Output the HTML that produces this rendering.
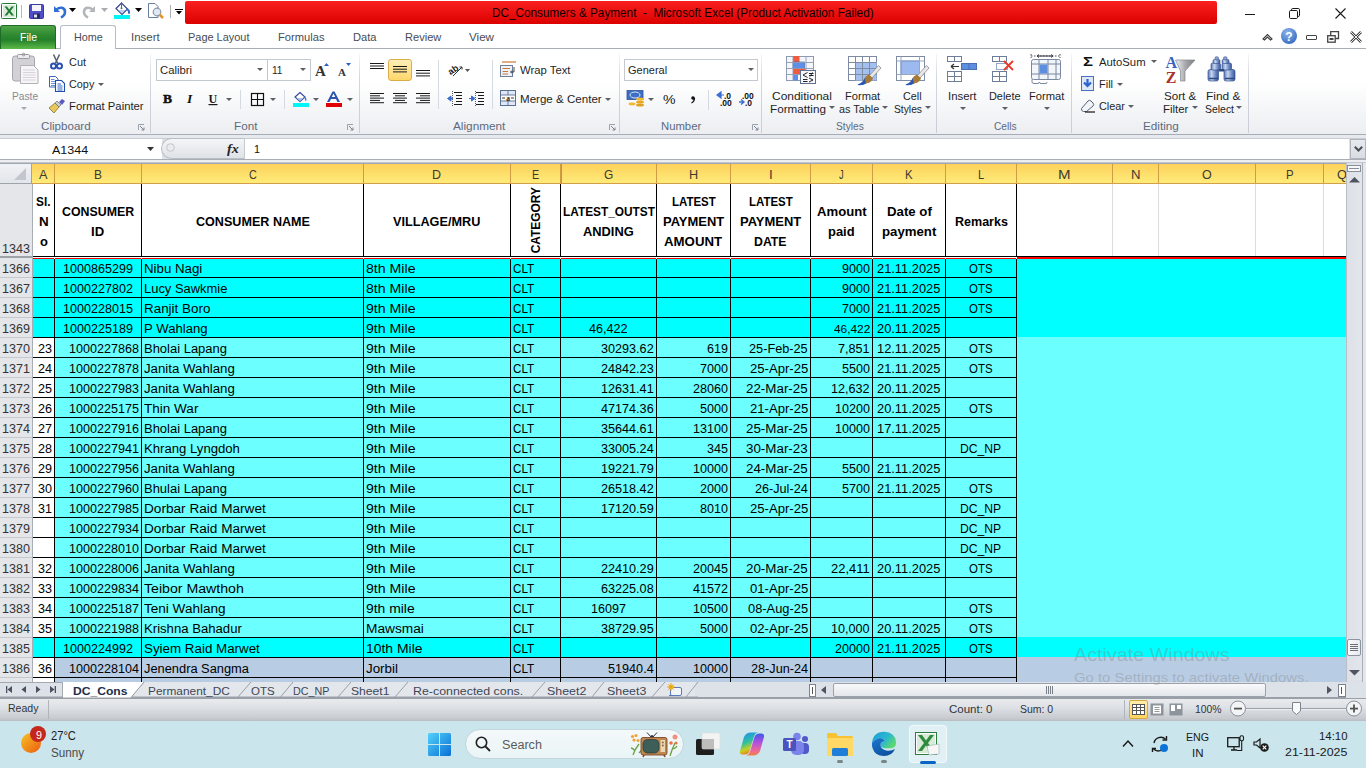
<!DOCTYPE html><html><head><meta charset="utf-8"><style>
*{margin:0;padding:0;box-sizing:border-box}
html,body{width:1366px;height:768px;overflow:hidden;background:#fff;font-family:"Liberation Sans",sans-serif;color:#000}
.a{position:absolute}
.t{white-space:pre;line-height:1;transform-origin:0 0}
svg.a{overflow:visible}
</style></head><body>
<div class="a" style="left:0px;top:0px;width:1366px;height:25px;background:#fff;"></div>
<svg class="a" style="left:1px;top:3px;" width="17" height="17" viewBox="0 0 17 17"><rect x="0.5" y="0.5" width="15" height="15" rx="1" fill="#fff" stroke="#217a3c"/><rect x="2" y="2" width="12" height="12" fill="#d8ecd9"/><path d="M3.5 3.5 L7 8 L3.5 12.5 L6 12.5 L8.2 9.4 L10.4 12.5 L13 12.5 L9.5 8 L13 3.5 L10.5 3.5 L8.2 6.6 L6 3.5 Z" fill="#1f7a36"/></svg>
<div class="a" style="left:21px;top:5px;width:1px;height:13px;background:#b8bcc2;"></div>
<svg class="a" style="left:29px;top:4px;" width="15" height="15" viewBox="0 0 15 15"><rect x="0.5" y="0.5" width="14" height="14" rx="1" fill="#4f4fc8" stroke="#3a3a9a"/><rect x="3" y="1" width="9" height="6" fill="#f4f4fa"/><rect x="4" y="9.5" width="7" height="5" fill="#2a2a60"/><rect x="5" y="10.5" width="3" height="3" fill="#dfe4f0"/></svg>
<svg class="a" style="left:51px;top:3px;" width="16" height="15" viewBox="0 0 16 15"><path d="M3 3 L3 9 L9 9 Z" fill="#2f6fd6"/><path d="M5 7 C8 3.5 14 4 14 9 C14 12 12 13.5 10 14.5" fill="none" stroke="#2f6fd6" stroke-width="2.6"/></svg>
<svg class="a" style="left:69px;top:8px;" width="8" height="5" viewBox="0 0 8 5"><path d="M0 0 H7 L3.5 4 Z" fill="#000"/></svg>
<svg class="a" style="left:82px;top:3px;" width="16" height="15" viewBox="0 0 16 15"><path d="M13 3 L13 9 L7 9 Z" fill="#b4b6ba"/><path d="M11 7 C8 3.5 2 4 2 9 C2 12 4 13.5 6 14.5" fill="none" stroke="#b4b6ba" stroke-width="2.6"/></svg>
<svg class="a" style="left:101px;top:8px;" width="8" height="5" viewBox="0 0 8 5"><path d="M0 0 H7 L3.5 4 Z" fill="#a9acb0"/></svg>
<svg class="a" style="left:114px;top:1px;" width="18" height="19" viewBox="0 0 18 19"><path d="M2 7.5 L7.5 2 L13.5 8 L8 13.5 Z" fill="#fff" stroke="#2d3f8a" stroke-width="1.1"/><path d="M4 9 L11.5 9 L8 12.5 Z" fill="#b9cdec"/><path d="M13 7 Q16.5 8.5 16 12 Q15.5 13.5 14 12.5 Q14.5 10 12.5 8.5 Z" fill="#3a66cc"/><path d="M7.5 1 V7" stroke="#666" stroke-width="1"/><circle cx="7.5" cy="7.3" r="1" fill="#666"/><rect x="0" y="14" width="16" height="4" fill="#00f6f6"/></svg>
<svg class="a" style="left:135px;top:8px;" width="8" height="5" viewBox="0 0 8 5"><path d="M0 0 H7 L3.5 4 Z" fill="#000"/></svg>
<svg class="a" style="left:148px;top:3px;" width="18" height="17" viewBox="0 0 18 17"><path d="M0.5 0.5 H7 L10 3.5 V14.5 H0.5 Z" fill="#fff" stroke="#6a7ea0"/><circle cx="9" cy="9" r="3.8" fill="#dfe9f5" stroke="#8a96a8" stroke-width="1.2"/><path d="M11.5 11.5 L15 15" stroke="#e0952a" stroke-width="2.5"/></svg>
<div class="a" style="left:170px;top:5px;width:1px;height:13px;background:#aeb2b8;"></div>
<div class="a" style="left:175px;top:9px;width:8px;height:1px;background:#000;"></div>
<svg class="a" style="left:176px;top:11px;" width="7" height="4" viewBox="0 0 7 4"><path d="M0 0 H6 L3 3.5 Z" fill="#000"/></svg>
<div class="a" style="left:185px;top:1px;width:1032px;height:23px;background:linear-gradient(#fa2020,#dc0101);border-radius:2px;"></div>
<div class="a t" style="left:491.60px;top:7px;font-size:12px;color:#0d0000;transform:scaleX(0.9798);">DC_Consumers &amp; Payment  -  Microsoft Excel (Product Activation Failed)</div>
<div class="a" style="left:1245px;top:14px;width:10px;height:1px;background:#1a1a1a;"></div>
<svg class="a" style="left:1289px;top:8px;" width="13" height="13" viewBox="0 0 13 13"><rect x="0.5" y="2.5" width="8" height="8" rx="1.2" fill="none" stroke="#1a1a1a"/><path d="M2.5 2.5 V1.8 Q2.5 0.5 3.8 0.5 H9.2 Q10.5 0.5 10.5 1.8 V7.2 Q10.5 8.5 9.2 8.5 H8.5" fill="none" stroke="#1a1a1a"/></svg>
<svg class="a" style="left:1335px;top:8px;" width="12" height="12" viewBox="0 0 12 12"><path d="M0.5 0.5 L10.5 10.5 M10.5 0.5 L0.5 10.5" stroke="#1a1a1a" stroke-width="1.1"/></svg>
<div class="a" style="left:0px;top:25px;width:1366px;height:24px;background:#fff;"></div>
<div class="a" style="left:0px;top:48px;width:1366px;height:1px;background:#a9aeb5;"></div>
<div class="a" style="left:0px;top:25px;width:56px;height:24px;background:linear-gradient(#4fa648 0%,#338c33 35%,#24802a 60%,#5cba48 100%);border-radius:3px 3px 0 0;border:1px solid #1e6b25;border-bottom:none;"></div>
<div class="a t" style="left:19.50px;top:32px;font-size:10.8px;color:#fff;transform:scaleX(0.9769);">File</div>
<div class="a" style="left:60px;top:25px;width:56px;height:24px;background:#fff;border:1px solid #b6bcc5;border-bottom:none;border-radius:3px 3px 0 0;"></div>
<div class="a t" style="left:73.60px;top:32px;font-size:10.8px;color:#474c56;transform:scaleX(0.9997);">Home</div>
<div class="a t" style="left:131.10px;top:32px;font-size:10.8px;color:#474c56;transform:scaleX(1.0625);">Insert</div>
<div class="a t" style="left:188.10px;top:32px;font-size:10.8px;color:#474c56;transform:scaleX(1.0140);">Page Layout</div>
<div class="a t" style="left:278.00px;top:32px;font-size:10.8px;color:#474c56;transform:scaleX(1.0353);">Formulas</div>
<div class="a t" style="left:353.00px;top:32px;font-size:10.8px;color:#474c56;transform:scaleX(1.0301);">Data</div>
<div class="a t" style="left:405.00px;top:32px;font-size:10.8px;color:#474c56;transform:scaleX(1.0251);">Review</div>
<div class="a t" style="left:469.00px;top:32px;font-size:10.8px;color:#474c56;transform:scaleX(1.0769);">View</div>
<svg class="a" style="left:1262px;top:32px;" width="12" height="9" viewBox="0 0 12 9"><path d="M1 7 L5.5 2.5 L10 7 L8.5 8 L5.5 5 L2.5 8 Z" fill="none" stroke="#3a3a3a" stroke-width="1.1"/></svg>
<svg class="a" style="left:1281px;top:28px;" width="17" height="17" viewBox="0 0 17 17"><defs><radialGradient id="hg" cx="0.4" cy="0.3" r="0.8"><stop offset="0" stop-color="#8fb6ec"/><stop offset="1" stop-color="#2f64c0"/></radialGradient></defs><circle cx="8" cy="8" r="8" fill="url(#hg)"/><text x="8" y="12.5" font-size="12" font-weight="bold" text-anchor="middle" fill="#fff" font-family="Liberation Sans">?</text></svg>
<div class="a" style="left:1306px;top:35px;width:11px;height:5px;background:transparent;border:1.3px solid #444;border-radius:1px;"></div>
<svg class="a" style="left:1327px;top:31px;" width="13" height="12" viewBox="0 0 13 12"><rect x="0.7" y="4.7" width="7.5" height="6.5" fill="none" stroke="#444" stroke-width="1.3"/><path d="M3.7 4.5 V0.7 H11.5 V7.5 H8.5" fill="none" stroke="#444" stroke-width="1.3"/><rect x="2.5" y="7" width="4" height="2" fill="#444"/></svg>
<svg class="a" style="left:1350px;top:31px;" width="12" height="12" viewBox="0 0 12 12"><path d="M1 1 L11 11 M11 1 L1 11" stroke="#444" stroke-width="2.6"/><path d="M1 1 L11 11 M11 1 L1 11" stroke="#fff" stroke-width="0.9"/></svg>
<div class="a" style="left:0px;top:49px;width:1366px;height:85px;background:linear-gradient(#ffffff 0%,#ffffff 40%,#f5f6f8 70%,#eceef1 100%);"></div>
<div class="a" style="left:0px;top:134px;width:1366px;height:1px;background:#a7adb6;"></div>
<div class="a" style="left:0px;top:135px;width:1366px;height:3px;background:#e6e9ed;"></div>
<div class="a" style="left:150px;top:53px;width:1px;height:80px;background:linear-gradient(rgba(210,215,222,0.2),#d3d8df 30%,#c9ced6);"></div>
<div class="a" style="left:359px;top:53px;width:1px;height:80px;background:linear-gradient(rgba(210,215,222,0.2),#d3d8df 30%,#c9ced6);"></div>
<div class="a" style="left:619px;top:53px;width:1px;height:80px;background:linear-gradient(rgba(210,215,222,0.2),#d3d8df 30%,#c9ced6);"></div>
<div class="a" style="left:761px;top:53px;width:1px;height:80px;background:linear-gradient(rgba(210,215,222,0.2),#d3d8df 30%,#c9ced6);"></div>
<div class="a" style="left:936px;top:53px;width:1px;height:80px;background:linear-gradient(rgba(210,215,222,0.2),#d3d8df 30%,#c9ced6);"></div>
<div class="a" style="left:1071px;top:53px;width:1px;height:80px;background:linear-gradient(rgba(210,215,222,0.2),#d3d8df 30%,#c9ced6);"></div>
<div class="a" style="left:1248px;top:53px;width:1px;height:80px;background:linear-gradient(rgba(210,215,222,0.2),#d3d8df 30%,#c9ced6);"></div>
<div class="a t" style="left:40.70px;top:121px;font-size:10.8px;color:#5d6a7e;transform:scaleX(1.0751);">Clipboard</div>
<div class="a t" style="left:234.30px;top:121px;font-size:10.8px;color:#5d6a7e;transform:scaleX(1.0828);">Font</div>
<div class="a t" style="left:453.30px;top:121px;font-size:10.8px;color:#5d6a7e;transform:scaleX(1.0911);">Alignment</div>
<div class="a t" style="left:660.70px;top:121px;font-size:10.8px;color:#5d6a7e;transform:scaleX(1.0465);">Number</div>
<div class="a t" style="left:835.60px;top:121px;font-size:10.8px;color:#5d6a7e;transform:scaleX(0.9453);">Styles</div>
<div class="a t" style="left:993.70px;top:121px;font-size:10.8px;color:#5d6a7e;transform:scaleX(0.9456);">Cells</div>
<div class="a t" style="left:1142.60px;top:121px;font-size:10.8px;color:#5d6a7e;transform:scaleX(1.0871);">Editing</div>
<svg class="a" style="left:138px;top:124px;" width="7" height="7" viewBox="0 0 7 7"><path d="M0.5 6 V0.5 H6" fill="none" stroke="#9aa2ad"/><path d="M2 2 L6 6 M6 3.5 V6 H3.5" fill="none" stroke="#7d8591" stroke-width="1"/></svg>
<svg class="a" style="left:347px;top:124px;" width="7" height="7" viewBox="0 0 7 7"><path d="M0.5 6 V0.5 H6" fill="none" stroke="#9aa2ad"/><path d="M2 2 L6 6 M6 3.5 V6 H3.5" fill="none" stroke="#7d8591" stroke-width="1"/></svg>
<svg class="a" style="left:609px;top:124px;" width="7" height="7" viewBox="0 0 7 7"><path d="M0.5 6 V0.5 H6" fill="none" stroke="#9aa2ad"/><path d="M2 2 L6 6 M6 3.5 V6 H3.5" fill="none" stroke="#7d8591" stroke-width="1"/></svg>
<svg class="a" style="left:752px;top:124px;" width="7" height="7" viewBox="0 0 7 7"><path d="M0.5 6 V0.5 H6" fill="none" stroke="#9aa2ad"/><path d="M2 2 L6 6 M6 3.5 V6 H3.5" fill="none" stroke="#7d8591" stroke-width="1"/></svg>
<svg class="a" style="left:11px;top:53px;" width="30" height="33" viewBox="0 0 30 33"><rect x="1.5" y="3" width="22" height="25" rx="2.5" fill="#d2d2d6" stroke="#a6a6ac"/><rect x="6.5" y="1.5" width="12" height="4" rx="1" fill="#ececf0" stroke="#9a9aa0"/><circle cx="12.5" cy="1.5" r="1.4" fill="none" stroke="#9a9aa0"/><path d="M9.5 12.5 H22.5 L27 17 V30.5 H9.5 Z" fill="#f6f4f6" stroke="#b3b0b6"/><path d="M12 17 H23.5 M12 19.5 H24.5 M12 22 H24.5 M12 24.5 H24.5 M12 27 H24.5" stroke="#d3d0d6" stroke-width="0.9"/></svg>
<div class="a t" style="left:11.50px;top:91px;font-size:10.8px;color:#8a8990;transform:scaleX(0.9451);">Paste</div>
<svg class="a" style="left:21px;top:107px;" width="7" height="4" viewBox="0 0 7 4"><path d="M0 0 H6 L3 3 Z" fill="#a7a9ae"/></svg>
<svg class="a" style="left:50px;top:54px;" width="13" height="16" viewBox="0 0 13 16"><path d="M3.5 0.5 L7.5 9 M9.5 0.5 L5.5 9" stroke="#5d636e" stroke-width="1.6"/><circle cx="3.5" cy="12" r="2.5" fill="none" stroke="#2a50b0" stroke-width="2"/><circle cx="9.5" cy="12" r="2.5" fill="none" stroke="#2a50b0" stroke-width="2"/></svg>
<div class="a t" style="left:68.60px;top:57px;font-size:10.8px;color:#1f1f1f;transform:scaleX(1.0115);">Cut</div>
<svg class="a" style="left:49px;top:76px;" width="17" height="16" viewBox="0 0 17 16"><path d="M0.5 0.5 H6.5 L9 3 V11 H0.5 Z" fill="#fff" stroke="#3a64b8"/><path d="M2 3.5 H5.5 M2 5.5 H7 M2 7.5 H7 M2 9.5 H7" stroke="#5b86d0" stroke-width="0.9"/><path d="M6.5 4.5 H12.5 L15.5 7.5 V15.5 H6.5 Z" fill="#fff" stroke="#1f4fa8" stroke-width="1.1"/><path d="M8.5 8 H12 M8.5 10 H13.5 M8.5 12 H13.5 M8.5 14 H13.5" stroke="#2f66c8" stroke-width="1"/></svg>
<div class="a t" style="left:68.60px;top:79px;font-size:10.8px;color:#1f1f1f;transform:scaleX(1.0035);">Copy</div>
<svg class="a" style="left:98px;top:83px;" width="7" height="4" viewBox="0 0 7 4"><path d="M0 0 H6 L3 3 Z" fill="#585c63"/></svg>
<svg class="a" style="left:48px;top:98px;" width="18" height="16" viewBox="0 0 18 16"><path d="M1 10 L7 5 L11 9 L6 15 Z" fill="#e6c95a" stroke="#8a7230" stroke-width="0.8"/><path d="M7 5 L11 9 L13 7 L9 3 Z" fill="#c9ccd2" stroke="#6c7078" stroke-width="0.7"/><path d="M11 4 L14 1 L17 3 L14 7 Z" fill="#5a5ac0"/></svg>
<div class="a t" style="left:68.50px;top:101px;font-size:10.8px;color:#1f1f1f;transform:scaleX(1.0445);">Format Painter</div>
<div class="a" style="left:156px;top:59px;width:112px;height:22px;background:#fff;border:1px solid #c3c9d2;"></div>
<div class="a" style="left:267px;top:59px;width:44px;height:22px;background:#fff;border:1px solid #c3c9d2;"></div>
<div class="a t" style="left:159.50px;top:65px;font-size:10.8px;color:#1f1f1f;transform:scaleX(1.0455);">Calibri</div>
<div class="a t" style="left:271.50px;top:65px;font-size:10.8px;color:#1f1f1f;transform:scaleX(0.9365);">11</div>
<svg class="a" style="left:257px;top:68px;" width="7" height="4" viewBox="0 0 7 4"><path d="M0 0 H6 L3 3 Z" fill="#5c5f66"/></svg>
<svg class="a" style="left:300px;top:68px;" width="7" height="4" viewBox="0 0 7 4"><path d="M0 0 H6 L3 3 Z" fill="#5c5f66"/></svg>
<svg class="a" style="left:315px;top:63px;" width="16" height="14" viewBox="0 0 16 14"><text x="0" y="13" font-family="Liberation Serif" font-size="15" font-weight="bold" fill="#333">A</text><path d="M9 3 L11.5 0 L14 3 Z" fill="#2d5fc0"/></svg>
<svg class="a" style="left:338px;top:63px;" width="14" height="14" viewBox="0 0 14 14"><text x="0" y="13" font-family="Liberation Serif" font-size="11" font-weight="bold" fill="#333">A</text><path d="M8 0 H13 L10.5 3 Z" fill="#2d5fc0"/></svg>
<svg class="a" style="left:163px;top:92px;" width="13" height="13" viewBox="0 0 13 13"><text x="0" y="11" font-family="Liberation Serif" font-size="13.5" font-weight="bold" fill="#111" stroke="#111" stroke-width="0.5">B</text></svg>
<svg class="a" style="left:187px;top:92px;" width="11" height="13" viewBox="0 0 11 13"><text x="0" y="11" font-family="Liberation Serif" font-size="13.5" font-style="italic" font-weight="bold" fill="#111">I</text></svg>
<svg class="a" style="left:208px;top:92px;" width="12" height="14" viewBox="0 0 12 14"><text x="0.5" y="10.5" font-family="Liberation Serif" font-size="12" font-weight="bold" fill="#1a1a1a" text-decoration="none">U</text><rect x="0.5" y="12" width="9" height="1.2" fill="#1a1a1a"/></svg>
<svg class="a" style="left:226px;top:98px;" width="7" height="4" viewBox="0 0 7 4"><path d="M0 0 H6 L3 3 Z" fill="#5c5f66"/></svg>
<div class="a" style="left:240px;top:90px;width:1px;height:19px;background:#d5dae0;"></div>
<svg class="a" style="left:251px;top:93px;" width="14" height="14" viewBox="0 0 14 14"><rect x="0.5" y="0.5" width="12" height="12" fill="none" stroke="#111" stroke-width="1.2"/><path d="M6.5 0.5 V12.5 M0.5 6.5 H12.5" stroke="#111" stroke-width="1.1"/></svg>
<svg class="a" style="left:270px;top:98px;" width="7" height="4" viewBox="0 0 7 4"><path d="M0 0 H6 L3 3 Z" fill="#5c5f66"/></svg>
<div class="a" style="left:284px;top:90px;width:1px;height:19px;background:#d5dae0;"></div>
<svg class="a" style="left:292px;top:91px;" width="18" height="17" viewBox="0 0 18 17"><path d="M3 6 L8 1.5 L13 6 L8 10.5 Z" fill="#fff" stroke="#33469a" stroke-width="1.1"/><path d="M4.5 7 L11.5 7 L8 10 Z" fill="#a9c2e8"/><path d="M12 5 C15 7 15 10 13.5 10" fill="#3d6fd0"/><rect x="1" y="12" width="16" height="4" fill="#00f6f6"/></svg>
<svg class="a" style="left:313px;top:98px;" width="7" height="4" viewBox="0 0 7 4"><path d="M0 0 H6 L3 3 Z" fill="#5c5f66"/></svg>
<svg class="a" style="left:325px;top:91px;" width="18" height="17" viewBox="0 0 18 17"><path d="M2 11 L7.5 0.5 H9.5 L15 11 H12.5 L11 8 H6 L4.5 11 Z M6.8 6 H10.2 L8.5 2.5 Z" fill="#2b54b0" fill-rule="evenodd"/><rect x="1" y="12" width="16" height="4" fill="#e00000"/></svg>
<svg class="a" style="left:347px;top:98px;" width="7" height="4" viewBox="0 0 7 4"><path d="M0 0 H6 L3 3 Z" fill="#5c5f66"/></svg>
<svg class="a" style="left:370px;top:63px;" width="16" height="8.5" viewBox="0 0 16 8.5"><rect x="0" y="0.0" width="14" height="1" fill="#1a1a1a"/><rect x="0" y="2.5" width="14" height="1" fill="#1a1a1a"/><rect x="0" y="5.0" width="14" height="1" fill="#1a1a1a"/></svg>
<div class="a" style="left:388px;top:59px;width:24px;height:22px;background:linear-gradient(#fff0b8,#ffd76a);border:1px solid #d9ae4a;border-radius:3px;"></div>
<svg class="a" style="left:393px;top:66px;" width="16" height="9.100000000000001" viewBox="0 0 16 9.100000000000001"><rect x="0" y="0.0" width="14" height="1" fill="#1a1a1a"/><rect x="0" y="2.7" width="14" height="1" fill="#1a1a1a"/><rect x="0" y="5.4" width="14" height="1" fill="#1a1a1a"/></svg>
<svg class="a" style="left:416px;top:70px;" width="16" height="9.100000000000001" viewBox="0 0 16 9.100000000000001"><rect x="0" y="0.0" width="14" height="1" fill="#1a1a1a"/><rect x="0" y="2.7" width="14" height="1" fill="#1a1a1a"/><rect x="0" y="5.4" width="14" height="1" fill="#1a1a1a"/></svg>
<svg class="a" style="left:370px;top:93px;" width="16" height="12.5" viewBox="0 0 16 12.5"><rect x="0" y="0.0" width="14" height="1" fill="#1a1a1a"/><rect x="0" y="2.3" width="10" height="1" fill="#1a1a1a"/><rect x="0" y="4.6" width="14" height="1" fill="#1a1a1a"/><rect x="0" y="6.8999999999999995" width="10" height="1" fill="#1a1a1a"/><rect x="0" y="9.2" width="14" height="1" fill="#1a1a1a"/></svg>
<svg class="a" style="left:393px;top:93px;" width="16" height="12.5" viewBox="0 0 16 12.5"><rect x="0" y="0.0" width="14" height="1" fill="#1a1a1a"/><rect x="2" y="2.3" width="10" height="1" fill="#1a1a1a"/><rect x="0" y="4.6" width="14" height="1" fill="#1a1a1a"/><rect x="2" y="6.8999999999999995" width="10" height="1" fill="#1a1a1a"/><rect x="0" y="9.2" width="14" height="1" fill="#1a1a1a"/></svg>
<svg class="a" style="left:416px;top:93px;" width="16" height="12.5" viewBox="0 0 16 12.5"><rect x="0" y="0.0" width="14" height="1" fill="#1a1a1a"/><rect x="4" y="2.3" width="10" height="1" fill="#1a1a1a"/><rect x="0" y="4.6" width="14" height="1" fill="#1a1a1a"/><rect x="4" y="6.8999999999999995" width="10" height="1" fill="#1a1a1a"/><rect x="0" y="9.2" width="14" height="1" fill="#1a1a1a"/></svg>
<div class="a" style="left:438px;top:60px;width:1px;height:49px;background:#d5dae0;"></div>
<svg class="a" style="left:447px;top:62px;" width="24" height="16" viewBox="0 0 24 16"><text x="1" y="11" font-family="Liberation Sans" font-size="9" font-weight="bold" fill="#222" transform="rotate(-35 6 8)">ab</text><path d="M6 14 L15 5 M12.5 5 H15 V7.5" stroke="#333" stroke-width="1" fill="none"/><path d="M18 7 H23 L20.5 10 Z" fill="#555"/></svg>
<svg class="a" style="left:447px;top:91px;" width="16" height="16" viewBox="0 0 16 16"><path d="M7 1.5 H15 M9 4.5 H15 M9 7.5 H15 M9 10.5 H15 M7 13.5 H15" stroke="#1a1a1a" stroke-width="1.2"/><path d="M5.5 0 V16" stroke="#333" stroke-width="0.8" stroke-dasharray="1 1"/><path d="M0.5 7.5 L4 5 V10 Z M2 7.5 H6" fill="#3c6ed0" stroke="#3c6ed0" stroke-width="1"/></svg>
<svg class="a" style="left:469px;top:91px;" width="16" height="16" viewBox="0 0 16 16"><path d="M7 1.5 H15 M9 4.5 H15 M9 7.5 H15 M9 10.5 H15 M7 13.5 H15" stroke="#1a1a1a" stroke-width="1.2"/><path d="M6.5 0 V16" stroke="#333" stroke-width="0.8" stroke-dasharray="1 1"/><path d="M6 7.5 L2.5 5 V10 Z M0 7.5 H4" fill="#3c6ed0" stroke="#3c6ed0" stroke-width="1"/></svg>
<div class="a" style="left:492px;top:60px;width:1px;height:49px;background:#d5dae0;"></div>
<svg class="a" style="left:500px;top:61px;" width="17" height="16" viewBox="0 0 17 16"><rect x="0.5" y="4.5" width="12" height="11" fill="#eef2f8" stroke="#6e7f99"/><path d="M2.5 7.5 H10 M2.5 10.5 H8 M2.5 13 H8" stroke="#c9783a" stroke-width="1.2"/><path d="M2 1 H16" stroke="#c9783a" stroke-width="1.2"/><path d="M14 6 V11 H11 M12 9.5 L10.5 11 L12 12.5" stroke="#333" stroke-width="0.9" fill="none"/></svg>
<div class="a t" style="left:519.50px;top:65px;font-size:10.8px;color:#1f1f1f;transform:scaleX(1.0473);">Wrap Text</div>
<svg class="a" style="left:500px;top:90px;" width="17" height="17" viewBox="0 0 17 17"><rect x="0.5" y="0.5" width="15" height="15" fill="#dfe8f6" stroke="#5a6f92"/><rect x="1" y="5" width="14" height="6" fill="#fff"/><path d="M1 5 H15 M1 11 H15 M8 1 V5 M8 11 V15" stroke="#5a6f92" stroke-width="0.9"/><text x="8" y="10.5" font-family="Liberation Serif" font-size="7.5" font-weight="bold" text-anchor="middle" fill="#222">a</text><path d="M2 8 H5 M11 8 H14" stroke="#222" stroke-width="0.9"/></svg>
<div class="a t" style="left:519.50px;top:94px;font-size:10.8px;color:#1f1f1f;transform:scaleX(1.0717);">Merge &amp; Center</div>
<svg class="a" style="left:605px;top:98px;" width="7" height="4" viewBox="0 0 7 4"><path d="M0 0 H6 L3 3 Z" fill="#5c5f66"/></svg>
<div class="a" style="left:624px;top:59px;width:134px;height:22px;background:#fff;border:1px solid #c3c9d2;"></div>
<div class="a t" style="left:627.60px;top:65px;font-size:10.8px;color:#1f1f1f;transform:scaleX(1.0176);">General</div>
<svg class="a" style="left:747.5px;top:68px;" width="7" height="4" viewBox="0 0 7 4"><path d="M0 0 H6 L3 3 Z" fill="#5c5f66"/></svg>
<svg class="a" style="left:627px;top:90px;" width="19" height="18" viewBox="0 0 19 18"><rect x="0" y="0.5" width="16" height="9" fill="#3f6fc4" stroke="#2f5298" stroke-width="0.8"/><ellipse cx="8" cy="5" rx="5" ry="3" fill="none" stroke="#cfe0f8" stroke-width="1"/><ellipse cx="13" cy="9" rx="4" ry="1.6" fill="#f0b830"/><ellipse cx="13" cy="12" rx="4" ry="1.6" fill="#e8a820"/><ellipse cx="13" cy="15" rx="4" ry="1.6" fill="#e0a020"/><ellipse cx="5" cy="14" rx="3.5" ry="1.4" fill="#f0b830"/></svg>
<svg class="a" style="left:648px;top:98px;" width="7" height="4" viewBox="0 0 7 4"><path d="M0 0 H6 L3 3 Z" fill="#5c5f66"/></svg>
<div class="a t" style="left:662.50px;top:94px;font-size:12px;color:#1a1a1a;transform:scaleX(1.1715);">%</div>
<svg class="a" style="left:690px;top:96px;" width="6" height="8" viewBox="0 0 6 8"><circle cx="3" cy="2" r="1.8" fill="#111"/><path d="M4.5 2 Q4.5 5.5 1.5 7" stroke="#111" stroke-width="1.3" fill="none"/></svg>
<div class="a" style="left:708px;top:90px;width:1px;height:20px;background:#d5dae0;"></div>
<svg class="a" style="left:716px;top:91px;" width="18" height="16" viewBox="0 0 18 16"><path d="M1 4 L5 1 V7 Z M4 4 H8" fill="#3c6ed0" stroke="#3c6ed0" stroke-width="1.2"/><text x="8" y="7.5" font-family="Liberation Sans" font-size="8.5" font-weight="bold" fill="#111">.0</text><text x="4" y="14.5" font-family="Liberation Sans" font-size="8.5" font-weight="bold" fill="#111">.00</text></svg>
<svg class="a" style="left:738px;top:91px;" width="18" height="16" viewBox="0 0 18 16"><text x="4" y="7.5" font-family="Liberation Sans" font-size="8.5" font-weight="bold" fill="#111">.00</text><path d="M1 11 H5 M3 8.5 L6 11 L3 13.5" stroke="#3c6ed0" stroke-width="1.4" fill="none"/><text x="7" y="14.5" font-family="Liberation Sans" font-size="8.5" font-weight="bold" fill="#111">.0</text></svg>
<svg class="a" style="left:786px;top:56px;" width="31" height="29" viewBox="0 0 31 29"><rect x="0.5" y="0.5" width="27" height="24" fill="#f4f6fb" stroke="#8e9bb0"/><rect x="7" y="0" width="6.5" height="6" fill="#f05a40"/><rect x="7" y="6" width="11.5" height="6.5" fill="#5d8ee8" stroke="#2d5ab0" stroke-width="0.6"/><rect x="7" y="12.5" width="12.5" height="6" fill="#f05a40"/><rect x="7" y="18.5" width="5" height="6" fill="#5d8ee8"/><path d="M7 0.5 V24.5 M20 0.5 V24.5 M0.5 6.5 H27.5 M0.5 12.5 H27.5 M0.5 18.5 H27.5" stroke="#8e9bb0" stroke-width="0.9"/><rect x="14.5" y="14.5" width="15" height="13" fill="#f6f8fc" stroke="#60708c"/><path d="M21.5 16.5 L17 19 L21.5 21.5 M17 23.5 H21.5 M17 25.5 H21.5 M23 17.5 H27.5 M23 19.5 H27.5 M26.5 16.5 L24 20.5 M23 22 L27 24 L23 26" stroke="#222" stroke-width="1" fill="none"/></svg>
<div class="a t" style="left:771.80px;top:91px;font-size:10.8px;color:#1f1f1f;transform:scaleX(1.1085);">Conditional</div>
<div class="a t" style="left:769.60px;top:104px;font-size:10.8px;color:#1f1f1f;transform:scaleX(1.0830);">Formatting</div>
<svg class="a" style="left:829px;top:106px;" width="7" height="4" viewBox="0 0 7 4"><path d="M0 0 H6 L3 3 Z" fill="#5c5f66"/></svg>
<svg class="a" style="left:848px;top:56px;" width="36" height="32" viewBox="0 0 36 32"><rect x="0.5" y="0.5" width="28" height="24" fill="#fff" stroke="#7d8ba3"/><rect x="7" y="6" width="21.5" height="18.5" fill="#a4c0f0"/><path d="M7.5 0.5 V24.5 M14.5 0.5 V24.5 M21.5 0.5 V24.5 M0.5 6.5 H28.5 M0.5 12.5 H28.5 M0.5 18.5 H28.5" stroke="#7d8ba3" stroke-width="1"/><path d="M30.5 9.5 L33 12 L24 22 L21.5 19.5 Z" fill="#e8e8ea" stroke="#8a8c90" stroke-width="0.8"/><path d="M21 18.5 L25 22.5 Q23 27 18 27.5 L15.5 25 Q16 20.5 21 18.5 Z" fill="#a87a3a"/><path d="M15.5 25 L18 27.5 Q14 30 9.5 29 Q13 27.5 15.5 25 Z" fill="#3d6fd0"/><path d="M16.5 22 Q15.5 26 10 28.5 L9.5 29 Q14.5 29.5 18 27.5 Z" fill="#2a55b0"/></svg>
<div class="a t" style="left:845.40px;top:91px;font-size:10.8px;color:#1f1f1f;transform:scaleX(1.0291);">Format</div>
<div class="a t" style="left:839.10px;top:104px;font-size:10.8px;color:#1f1f1f;transform:scaleX(1.0042);">as Table</div>
<svg class="a" style="left:882px;top:106px;" width="7" height="4" viewBox="0 0 7 4"><path d="M0 0 H6 L3 3 Z" fill="#5c5f66"/></svg>
<svg class="a" style="left:896px;top:56px;" width="36" height="32" viewBox="0 0 36 32"><rect x="0.5" y="0.5" width="28" height="24" fill="#fff" stroke="#7d8ba3"/><rect x="5" y="5" width="18.5" height="13.5" fill="#9dbaf0" stroke="#5d8ae0"/><path d="M5 0.5 V24.5 M23.5 0.5 V24.5 M0.5 5 H28.5 M0.5 18.5 H28.5" stroke="#9aa7bb" stroke-width="1"/><path d="M30.5 9.5 L33 12 L24 22 L21.5 19.5 Z" fill="#e8e8ea" stroke="#8a8c90" stroke-width="0.8"/><path d="M21 18.5 L25 22.5 Q23 27 18 27.5 L15.5 25 Q16 20.5 21 18.5 Z" fill="#a87a3a"/><path d="M15.5 25 L18 27.5 Q14 30 9.5 29 Q13 27.5 15.5 25 Z" fill="#3d6fd0"/><path d="M16.5 22 Q15.5 26 10 28.5 L9.5 29 Q14.5 29.5 18 27.5 Z" fill="#2a55b0"/></svg>
<div class="a t" style="left:902.50px;top:91px;font-size:10.8px;color:#1f1f1f;transform:scaleX(0.9997);">Cell</div>
<div class="a t" style="left:893.60px;top:104px;font-size:10.8px;color:#1f1f1f;transform:scaleX(0.9521);">Styles</div>
<svg class="a" style="left:925px;top:106px;" width="7" height="4" viewBox="0 0 7 4"><path d="M0 0 H6 L3 3 Z" fill="#5c5f66"/></svg>
<svg class="a" style="left:946px;top:55px;" width="33" height="28" viewBox="0 0 33 28"><rect x="1.5" y="1.5" width="14" height="5" fill="#fff" stroke="#6e7e98"/><path d="M8.5 1.5 V6.5" stroke="#6e7e98"/><rect x="1.5" y="16.5" width="14" height="10" fill="#fff" stroke="#6e7e98"/><path d="M8.5 16.5 V26.5 M1.5 21.5 H15.5" stroke="#6e7e98"/><rect x="15.5" y="8.5" width="15" height="6" fill="#5d8fe0" stroke="#4a70b0"/><path d="M23 8.5 V14.5" stroke="#4a70b0"/><path d="M5 11.5 H13 M5 11.5 L8 9 M5 11.5 L8 14" stroke="#333" stroke-width="1.2" fill="none"/></svg>
<div class="a t" style="left:948.30px;top:91px;font-size:10.8px;color:#1f1f1f;transform:scaleX(1.0551);">Insert</div>
<svg class="a" style="left:959.6px;top:107px;" width="7" height="4" viewBox="0 0 7 4"><path d="M0 0 H6 L3 3 Z" fill="#5c5f66"/></svg>
<svg class="a" style="left:991px;top:55px;" width="30" height="28" viewBox="0 0 30 28"><rect x="1.5" y="1.5" width="14" height="5" fill="#fff" stroke="#6e7e98"/><path d="M8.5 1.5 V6.5" stroke="#6e7e98"/><rect x="1.5" y="16.5" width="14" height="10" fill="#fff" stroke="#6e7e98"/><path d="M8.5 16.5 V26.5 M1.5 21.5 H15.5" stroke="#6e7e98"/><rect x="5.5" y="8.5" width="11" height="6" fill="none" stroke="#2b4a90" stroke-dasharray="1 1"/><path d="M13 6 L22 15 M22 6 L13 15" stroke="#e83a2a" stroke-width="1.8"/></svg>
<div class="a t" style="left:988.70px;top:91px;font-size:10.8px;color:#1f1f1f;transform:scaleX(1.0090);">Delete</div>
<svg class="a" style="left:1001.5px;top:107px;" width="7" height="4" viewBox="0 0 7 4"><path d="M0 0 H6 L3 3 Z" fill="#5c5f66"/></svg>
<svg class="a" style="left:1030px;top:54px;" width="33" height="31" viewBox="0 0 33 31"><path d="M1 2 H30 M1 0 V4 M30 0 V4" stroke="#334" stroke-width="0.9" stroke-dasharray="1.5 1.5"/><path d="M8 2 H22 M9 0.5 L7 2 L9 3.5 M21 0.5 L23 2 L21 3.5" stroke="#334" fill="none"/><rect x="1.5" y="5.5" width="29" height="20" rx="2" fill="#f2f5fa" stroke="#7a88a0"/><path d="M9 5.5 V25.5 M18 5.5 V25.5 M26 5.5 V25.5 M1.5 10 H30.5 M1.5 20 H30.5" stroke="#7a88a0"/><rect x="9.5" y="10.5" width="8" height="9" fill="#5d8fe0"/><path d="M2 25.5 V28 Q2 29.5 4 29.5 H8 Q9 29.5 9 28 M9.5 28 Q9.5 29.5 11 29.5 H16 Q17 29.5 17 28" fill="none" stroke="#7a88a0"/></svg>
<div class="a t" style="left:1028.60px;top:91px;font-size:10.8px;color:#1f1f1f;transform:scaleX(1.0350);">Format</div>
<svg class="a" style="left:1043.5px;top:107px;" width="7" height="4" viewBox="0 0 7 4"><path d="M0 0 H6 L3 3 Z" fill="#5c5f66"/></svg>
<div class="a t" style="left:1082.50px;top:55px;font-size:13px;color:#111;transform:scaleX(1.2819);font-weight:bold;">Σ</div>
<div class="a t" style="left:1099.20px;top:57px;font-size:10.8px;color:#1f1f1f;transform:scaleX(1.0490);">AutoSum</div>
<svg class="a" style="left:1150.5px;top:60px;" width="7" height="4" viewBox="0 0 7 4"><path d="M0 0 H6 L3 3 Z" fill="#5c5f66"/></svg>
<svg class="a" style="left:1081px;top:76px;" width="14" height="16" viewBox="0 0 14 16"><rect x="0.5" y="0.5" width="12" height="14" fill="#dce8f8" stroke="#4a72c2"/><path d="M6.5 3 V9 M3 6.5 L6.5 10 L10 6.5" stroke="#2a62d0" stroke-width="2.2" fill="none"/></svg>
<div class="a t" style="left:1099.00px;top:79px;font-size:10.8px;color:#1f1f1f;transform:scaleX(1.0148);">Fill</div>
<svg class="a" style="left:1117px;top:83px;" width="7" height="4" viewBox="0 0 7 4"><path d="M0 0 H6 L3 3 Z" fill="#5c5f66"/></svg>
<svg class="a" style="left:1080px;top:99px;" width="16" height="14" viewBox="0 0 16 14"><path d="M1.5 9.5 L8 2 Q9.5 0.5 11 2 L13 4 Q14.5 5.5 13 7 L6.5 12.5 H3.5 Q1 12 1.5 9.5 Z" fill="#f2f4f7" stroke="#56607a"/><path d="M5 13 H15" stroke="#111" stroke-width="1.2"/></svg>
<div class="a t" style="left:1099.00px;top:101px;font-size:10.8px;color:#1f1f1f;transform:scaleX(1.0074);">Clear</div>
<svg class="a" style="left:1128px;top:105px;" width="7" height="4" viewBox="0 0 7 4"><path d="M0 0 H6 L3 3 Z" fill="#5c5f66"/></svg>
<svg class="a" style="left:1164px;top:53px;" width="34" height="32" viewBox="0 0 34 32"><defs><linearGradient id="fun" x1="0" y1="0" x2="1" y2="0"><stop offset="0" stop-color="#f0f0f2"/><stop offset="0.5" stop-color="#a8aaae"/><stop offset="1" stop-color="#7a7c80"/></linearGradient></defs><path d="M11.5 7 H31 L21 18 V28 H16.5 V18 Z" fill="url(#fun)" stroke="#85878c" stroke-width="0.7"/><text x="1.5" y="15" font-family="Liberation Serif" font-size="16" font-weight="bold" fill="#3a62c0" stroke="#fff" stroke-width="0.4" paint-order="stroke">A</text><text x="1.8" y="30" font-family="Liberation Serif" font-size="16" font-weight="bold" fill="#a83232" stroke="#fff" stroke-width="0.4" paint-order="stroke">Z</text></svg>
<div class="a t" style="left:1164.30px;top:91px;font-size:10.8px;color:#1f1f1f;transform:scaleX(1.0763);">Sort &amp;</div>
<div class="a t" style="left:1163.40px;top:104px;font-size:10.8px;color:#1f1f1f;transform:scaleX(1.0583);">Filter</div>
<svg class="a" style="left:1191.7px;top:106px;" width="7" height="4" viewBox="0 0 7 4"><path d="M0 0 H6 L3 3 Z" fill="#5c5f66"/></svg>
<svg class="a" style="left:1207px;top:56px;" width="30" height="27" viewBox="0 0 30 27"><defs><linearGradient id="bin" x1="0" y1="0" x2="1" y2="0"><stop offset="0" stop-color="#5a78b8"/><stop offset="0.35" stop-color="#c9d6ee"/><stop offset="0.7" stop-color="#6d8cc8"/><stop offset="1" stop-color="#3d5a98"/></linearGradient></defs><rect x="1" y="13.5" width="10.5" height="11.5" rx="2" fill="url(#bin)" stroke="#34508a" stroke-width="0.7"/><rect x="17" y="13.5" width="11" height="11.5" rx="2" fill="url(#bin)" stroke="#34508a" stroke-width="0.7"/><rect x="4" y="7" width="9.5" height="7" rx="1.5" fill="url(#bin)" stroke="#34508a" stroke-width="0.7"/><rect x="15" y="7" width="9.5" height="7" rx="1.5" fill="url(#bin)" stroke="#34508a" stroke-width="0.7"/><rect x="6" y="3.5" width="7" height="4" rx="1.2" fill="url(#bin)" stroke="#34508a" stroke-width="0.6"/><rect x="15" y="3.5" width="7" height="4" rx="1.2" fill="url(#bin)" stroke="#34508a" stroke-width="0.6"/><rect x="8" y="0.8" width="3.5" height="3" rx="1" fill="#8aa2d2" stroke="#34508a" stroke-width="0.5"/><rect x="16.5" y="0.8" width="3.5" height="3" rx="1" fill="#8aa2d2" stroke="#34508a" stroke-width="0.5"/><rect x="11.5" y="13" width="5.5" height="2.5" fill="#2e4a84"/><path d="M2 22.5 H11 M18 22.5 H27.5" stroke="#2e4a84" stroke-width="1.4"/></svg>
<div class="a t" style="left:1205.60px;top:91px;font-size:10.8px;color:#1f1f1f;transform:scaleX(1.1053);">Find &amp;</div>
<div class="a t" style="left:1204.60px;top:104px;font-size:10.8px;color:#1f1f1f;transform:scaleX(0.9661);">Select</div>
<svg class="a" style="left:1236px;top:106px;" width="7" height="4" viewBox="0 0 7 4"><path d="M0 0 H6 L3 3 Z" fill="#5c5f66"/></svg>
<div class="a" style="left:0px;top:138px;width:1366px;height:26px;background:#dfe3e8;"></div>
<div class="a" style="left:0px;top:138px;width:1366px;height:1px;background:#c9cdd3;"></div>
<div class="a" style="left:0px;top:139px;width:162px;height:20px;background:#fff;"></div>
<div class="a t" style="left:52.30px;top:145px;font-size:11.2px;color:#111;transform:scaleX(1.1178);">A1344</div>
<svg class="a" style="left:147px;top:147px;" width="8" height="5" viewBox="0 0 8 5"><path d="M0 0 H7 L3.5 4 Z" fill="#333"/></svg>
<div class="a" style="left:161px;top:138px;width:84px;height:21px;background:linear-gradient(#f4f5f7,#dfe2e6);border:1px solid #b9bec6;border-right:none;border-radius:11px 0 0 11px"></div>
<svg class="a" style="left:166px;top:143px;" width="9" height="9" viewBox="0 0 9 9"><circle cx="4.5" cy="4.5" r="3.8" fill="#e9ebee" stroke="#c3c7cd"/></svg>
<div class="a t" style="left:226.50px;top:143px;font-size:12px;color:#222;transform:scaleX(1.1785);font-family:'Liberation Serif';font-style:italic;font-weight:bold;">fx</div>
<div class="a" style="left:244px;top:138px;width:1px;height:21px;background:#c5cad1;"></div>
<div class="a" style="left:245px;top:139px;width:1104px;height:20px;background:#fff;"></div>
<div class="a t" style="left:254.00px;top:144px;font-size:11.5px;color:#111;transform:scaleX(0.9381);">1</div>
<div class="a" style="left:1350px;top:139px;width:16px;height:20px;background:linear-gradient(#e6e9ed,#d9dde2);border:1px solid #b0b5bc;"></div>
<svg class="a" style="left:1354px;top:146px;" width="9" height="6" viewBox="0 0 9 6"><path d="M0.8 0.8 L4.5 4.5 L8.2 0.8" fill="none" stroke="#4a4f57" stroke-width="2"/></svg>
<div class="a" style="left:0px;top:159px;width:1366px;height:1px;background:#a9aeb5;"></div>
<div class="a" style="left:0px;top:160px;width:1366px;height:2px;background:#eceef2;"></div>
<div class="a" style="left:0px;top:162px;width:1366px;height:1px;background:#c5c9cf;"></div>
<div class="a" style="left:0px;top:163px;width:1346px;height:1px;background:#a0a6ae;"></div>
<div class="a" style="left:0px;top:164px;width:32px;height:19px;background:linear-gradient(#f0f2f5,#e2e5ea);"></div>
<svg class="a" style="left:13px;top:167px;" width="14" height="14" viewBox="0 0 14 14"><path d="M13 1 L13 13 L1 13 Z" fill="#c3c7cd"/></svg>
<div class="a" style="left:31px;top:164px;width:1px;height:20px;background:#9ea4ac;"></div>
<div class="a" style="left:32px;top:164px;width:1314px;height:19px;background:linear-gradient(#fcd25c,#ffeb79);"></div>
<div class="a" style="left:0px;top:183px;width:32px;height:1px;background:#9ea4ac;"></div>
<div class="a" style="left:32px;top:183px;width:1314px;height:1px;background:#d49f48;"></div>
<div class="a" style="left:561px;top:164px;width:1px;height:19px;background:#c99240;"></div>
<div class="a" style="left:54px;top:164px;width:1px;height:19px;background:#d29c44;"></div>
<div class="a t" style="left:39.25px;top:169px;font-size:12.3px;color:#3a3a30;transform:scaleX(1.0353);">A</div>
<div class="a" style="left:141px;top:164px;width:1px;height:19px;background:#d29c44;"></div>
<div class="a t" style="left:94.01px;top:169px;font-size:12.3px;color:#3a3a30;transform:scaleX(0.9727);">B</div>
<div class="a" style="left:363px;top:164px;width:1px;height:19px;background:#d29c44;"></div>
<div class="a t" style="left:248.59px;top:169px;font-size:12.3px;color:#3a3a30;transform:scaleX(0.8803);">C</div>
<div class="a" style="left:510px;top:164px;width:1px;height:19px;background:#d29c44;"></div>
<div class="a t" style="left:432.49px;top:169px;font-size:12.3px;color:#3a3a30;transform:scaleX(1.0157);">D</div>
<div class="a" style="left:560px;top:164px;width:1px;height:19px;background:#d29c44;"></div>
<div class="a t" style="left:531.92px;top:169px;font-size:12.3px;color:#3a3a30;transform:scaleX(0.8726);">E</div>
<div class="a" style="left:656px;top:164px;width:1px;height:19px;background:#d29c44;"></div>
<div class="a t" style="left:603.87px;top:169px;font-size:12.3px;color:#3a3a30;transform:scaleX(0.9675);">G</div>
<div class="a" style="left:730px;top:164px;width:1px;height:19px;background:#d29c44;"></div>
<div class="a t" style="left:688.93px;top:169px;font-size:12.3px;color:#3a3a30;transform:scaleX(1.0289);">H</div>
<div class="a" style="left:810px;top:164px;width:1px;height:19px;background:#d29c44;"></div>
<div class="a t" style="left:768.65px;top:169px;font-size:12.3px;color:#3a3a30;transform:scaleX(1.0818);">I</div>
<div class="a" style="left:872px;top:164px;width:1px;height:19px;background:#d29c44;"></div>
<div class="a t" style="left:839.16px;top:169px;font-size:12.3px;color:#3a3a30;transform:scaleX(0.7609);">J</div>
<div class="a" style="left:945px;top:164px;width:1px;height:19px;background:#d29c44;"></div>
<div class="a t" style="left:905.19px;top:169px;font-size:12.3px;color:#3a3a30;transform:scaleX(0.9298);">K</div>
<div class="a" style="left:1016px;top:164px;width:1px;height:19px;background:#d29c44;"></div>
<div class="a t" style="left:977.92px;top:169px;font-size:12.3px;color:#3a3a30;transform:scaleX(0.9007);">L</div>
<div class="a" style="left:1112px;top:164px;width:1px;height:19px;background:#d29c44;"></div>
<div class="a t" style="left:1058.23px;top:169px;font-size:12.3px;color:#3a3a30;transform:scaleX(1.2242);">M</div>
<div class="a" style="left:1158px;top:164px;width:1px;height:19px;background:#d29c44;"></div>
<div class="a t" style="left:1130.76px;top:169px;font-size:12.3px;color:#3a3a30;transform:scaleX(1.0669);">N</div>
<div class="a" style="left:1255px;top:164px;width:1px;height:19px;background:#d29c44;"></div>
<div class="a t" style="left:1202.14px;top:169px;font-size:12.3px;color:#3a3a30;transform:scaleX(1.0151);">O</div>
<div class="a" style="left:1323px;top:164px;width:1px;height:19px;background:#d29c44;"></div>
<div class="a t" style="left:1285.71px;top:169px;font-size:12.3px;color:#3a3a30;transform:scaleX(0.9245);">P</div>
<div class="a" style="left:1346px;top:164px;width:1px;height:19px;background:#d29c44;"></div>
<div class="a t" style="left:1337.06px;top:169px;font-size:12.3px;color:#3a3a30;transform:scaleX(1.0319);">Q</div>
<div class="a" style="left:0px;top:184px;width:32px;height:498px;background:#e4e6ea;"></div>
<div class="a" style="left:32px;top:184px;width:1px;height:498px;background:#a9aeb5;"></div>
<div class="a" style="left:0px;top:256px;width:32px;height:2px;background:#9da2a9;"></div>
<div class="a" style="left:0px;top:277px;width:32px;height:1px;background:#c5c9cf;"></div>
<div class="a t" style="left:2.01px;top:263px;font-size:12.3px;color:#333;transform:scaleX(1.0229);">1366</div>
<div class="a" style="left:0px;top:297px;width:32px;height:1px;background:#c5c9cf;"></div>
<div class="a t" style="left:2.01px;top:283px;font-size:12.3px;color:#333;transform:scaleX(1.0229);">1367</div>
<div class="a" style="left:0px;top:317px;width:32px;height:1px;background:#c5c9cf;"></div>
<div class="a t" style="left:2.01px;top:303px;font-size:12.3px;color:#333;transform:scaleX(1.0229);">1368</div>
<div class="a" style="left:0px;top:337px;width:32px;height:1px;background:#c5c9cf;"></div>
<div class="a t" style="left:2.01px;top:323px;font-size:12.3px;color:#333;transform:scaleX(1.0229);">1369</div>
<div class="a" style="left:0px;top:357px;width:32px;height:1px;background:#c5c9cf;"></div>
<div class="a t" style="left:2.01px;top:343px;font-size:12.3px;color:#333;transform:scaleX(1.0229);">1370</div>
<div class="a" style="left:0px;top:377px;width:32px;height:1px;background:#c5c9cf;"></div>
<div class="a t" style="left:2.01px;top:363px;font-size:12.3px;color:#333;transform:scaleX(1.0229);">1371</div>
<div class="a" style="left:0px;top:397px;width:32px;height:1px;background:#c5c9cf;"></div>
<div class="a t" style="left:2.01px;top:383px;font-size:12.3px;color:#333;transform:scaleX(1.0229);">1372</div>
<div class="a" style="left:0px;top:417px;width:32px;height:1px;background:#c5c9cf;"></div>
<div class="a t" style="left:2.01px;top:403px;font-size:12.3px;color:#333;transform:scaleX(1.0229);">1373</div>
<div class="a" style="left:0px;top:437px;width:32px;height:1px;background:#c5c9cf;"></div>
<div class="a t" style="left:2.01px;top:423px;font-size:12.3px;color:#333;transform:scaleX(1.0229);">1374</div>
<div class="a" style="left:0px;top:457px;width:32px;height:1px;background:#c5c9cf;"></div>
<div class="a t" style="left:2.01px;top:443px;font-size:12.3px;color:#333;transform:scaleX(1.0229);">1375</div>
<div class="a" style="left:0px;top:477px;width:32px;height:1px;background:#c5c9cf;"></div>
<div class="a t" style="left:2.01px;top:463px;font-size:12.3px;color:#333;transform:scaleX(1.0229);">1376</div>
<div class="a" style="left:0px;top:497px;width:32px;height:1px;background:#c5c9cf;"></div>
<div class="a t" style="left:2.01px;top:483px;font-size:12.3px;color:#333;transform:scaleX(1.0229);">1377</div>
<div class="a" style="left:0px;top:517px;width:32px;height:1px;background:#c5c9cf;"></div>
<div class="a t" style="left:2.01px;top:503px;font-size:12.3px;color:#333;transform:scaleX(1.0229);">1378</div>
<div class="a" style="left:0px;top:537px;width:32px;height:1px;background:#c5c9cf;"></div>
<div class="a t" style="left:2.01px;top:523px;font-size:12.3px;color:#333;transform:scaleX(1.0229);">1379</div>
<div class="a" style="left:0px;top:557px;width:32px;height:1px;background:#c5c9cf;"></div>
<div class="a t" style="left:2.01px;top:543px;font-size:12.3px;color:#333;transform:scaleX(1.0229);">1380</div>
<div class="a" style="left:0px;top:577px;width:32px;height:1px;background:#c5c9cf;"></div>
<div class="a t" style="left:2.01px;top:563px;font-size:12.3px;color:#333;transform:scaleX(1.0229);">1381</div>
<div class="a" style="left:0px;top:597px;width:32px;height:1px;background:#c5c9cf;"></div>
<div class="a t" style="left:2.01px;top:583px;font-size:12.3px;color:#333;transform:scaleX(1.0229);">1382</div>
<div class="a" style="left:0px;top:617px;width:32px;height:1px;background:#c5c9cf;"></div>
<div class="a t" style="left:2.01px;top:603px;font-size:12.3px;color:#333;transform:scaleX(1.0229);">1383</div>
<div class="a" style="left:0px;top:637px;width:32px;height:1px;background:#c5c9cf;"></div>
<div class="a t" style="left:2.01px;top:623px;font-size:12.3px;color:#333;transform:scaleX(1.0229);">1384</div>
<div class="a" style="left:0px;top:657px;width:32px;height:1px;background:#c5c9cf;"></div>
<div class="a t" style="left:2.01px;top:643px;font-size:12.3px;color:#333;transform:scaleX(1.0229);">1385</div>
<div class="a" style="left:0px;top:677px;width:32px;height:1px;background:#c5c9cf;"></div>
<div class="a t" style="left:2.01px;top:663px;font-size:12.3px;color:#333;transform:scaleX(1.0229);">1386</div>
<div class="a t" style="left:2.01px;top:243px;font-size:12.3px;color:#333;transform:scaleX(1.0229);">1343</div>
<div class="a" style="left:33px;top:184px;width:1313px;height:72px;background:#fff;"></div>
<div class="a" style="left:1112px;top:184px;width:1px;height:72px;background:#dadcdf;"></div>
<div class="a" style="left:1158px;top:184px;width:1px;height:72px;background:#dadcdf;"></div>
<div class="a" style="left:1255px;top:184px;width:1px;height:72px;background:#dadcdf;"></div>
<div class="a" style="left:1323px;top:184px;width:1px;height:72px;background:#dadcdf;"></div>
<div class="a" style="left:33px;top:256px;width:983px;height:1px;background:#000;"></div>
<div class="a" style="left:33px;top:257px;width:983px;height:1px;background:#fff;"></div>
<div class="a" style="left:33px;top:258px;width:983px;height:1px;background:#f00;"></div>
<div class="a" style="left:1016px;top:256px;width:330px;height:1px;background:#000;"></div>
<div class="a" style="left:1016px;top:257px;width:330px;height:2px;background:#f00;"></div>
<div class="a t" style="left:36.27px;top:196px;font-size:12.3px;color:#000;transform:scaleX(0.9618);font-weight:bold;">Sl.</div>
<div class="a t" style="left:38.67px;top:216px;font-size:12.3px;color:#000;transform:scaleX(1.0884);font-weight:bold;">N</div>
<div class="a t" style="left:39.55px;top:236px;font-size:12.3px;color:#000;transform:scaleX(1.0505);font-weight:bold;">o</div>
<div class="a t" style="left:61.95px;top:206px;font-size:12.3px;color:#000;transform:scaleX(1.0049);font-weight:bold;">CONSUMER</div>
<div class="a t" style="left:91.42px;top:226px;font-size:12.3px;color:#000;transform:scaleX(1.0698);font-weight:bold;">ID</div>
<div class="a t" style="left:195.52px;top:216px;font-size:12.3px;color:#000;transform:scaleX(1.0231);font-weight:bold;">CONSUMER NAME</div>
<div class="a t" style="left:393.32px;top:216px;font-size:12.3px;color:#000;transform:scaleX(1.0310);font-weight:bold;">VILLAGE/MRU</div>
<div class="a t" style="left:562.51px;top:206px;font-size:12.3px;color:#000;transform:scaleX(0.9638);font-weight:bold;">LATEST_OUTST</div>
<div class="a t" style="left:583.14px;top:226px;font-size:12.3px;color:#000;transform:scaleX(1.0456);font-weight:bold;">ANDING</div>
<div class="a t" style="left:671.64px;top:196px;font-size:12.3px;color:#000;transform:scaleX(0.9318);font-weight:bold;">LATEST</div>
<div class="a t" style="left:662.88px;top:216px;font-size:12.3px;color:#000;transform:scaleX(1.0540);font-weight:bold;">PAYMENT</div>
<div class="a t" style="left:664.43px;top:236px;font-size:12.3px;color:#000;transform:scaleX(1.0771);font-weight:bold;">AMOUNT</div>
<div class="a t" style="left:748.64px;top:196px;font-size:12.3px;color:#000;transform:scaleX(0.9318);font-weight:bold;">LATEST</div>
<div class="a t" style="left:739.88px;top:216px;font-size:12.3px;color:#000;transform:scaleX(1.0540);font-weight:bold;">PAYMENT</div>
<div class="a t" style="left:754.22px;top:236px;font-size:12.3px;color:#000;transform:scaleX(0.9995);font-weight:bold;">DATE</div>
<div class="a t" style="left:816.72px;top:206px;font-size:12.3px;color:#000;transform:scaleX(1.0667);font-weight:bold;">Amount</div>
<div class="a t" style="left:828.19px;top:226px;font-size:12.3px;color:#000;transform:scaleX(1.0525);font-weight:bold;">paid</div>
<div class="a t" style="left:886.60px;top:206px;font-size:12.3px;color:#000;transform:scaleX(1.0747);font-weight:bold;">Date of</div>
<div class="a t" style="left:881.82px;top:226px;font-size:12.3px;color:#000;transform:scaleX(1.0745);font-weight:bold;">payment</div>
<div class="a t" style="left:954.54px;top:216px;font-size:12.3px;color:#000;transform:scaleX(1.0182);font-weight:bold;">Remarks</div>
<div class="a t" style="left:502.4px;top:214px;font-size:12.3px;font-weight:bold;transform-origin:50% 50%;transform:rotate(-90deg) scaleX(0.9691);width:68.3px;text-align:center">CATEGORY</div>
<div class="a" style="left:33px;top:259px;width:21px;height:18px;background:#00ffff;"></div>
<div class="a" style="left:55px;top:259px;width:961px;height:18px;background:#00ffff;"></div>
<div class="a" style="left:1017px;top:259px;width:329px;height:19px;background:#00ffff;"></div>
<div class="a" style="left:33px;top:277px;width:983px;height:1px;background:#000;"></div>
<div class="a" style="left:33px;top:278px;width:21px;height:19px;background:#00ffff;"></div>
<div class="a" style="left:55px;top:278px;width:961px;height:19px;background:#00ffff;"></div>
<div class="a" style="left:1017px;top:277px;width:329px;height:20px;background:#00ffff;"></div>
<div class="a" style="left:33px;top:297px;width:983px;height:1px;background:#000;"></div>
<div class="a" style="left:33px;top:298px;width:21px;height:19px;background:#00ffff;"></div>
<div class="a" style="left:55px;top:298px;width:961px;height:19px;background:#00ffff;"></div>
<div class="a" style="left:1017px;top:297px;width:329px;height:20px;background:#00ffff;"></div>
<div class="a" style="left:33px;top:317px;width:983px;height:1px;background:#000;"></div>
<div class="a" style="left:33px;top:318px;width:21px;height:19px;background:#00ffff;"></div>
<div class="a" style="left:55px;top:318px;width:961px;height:19px;background:#00ffff;"></div>
<div class="a" style="left:1017px;top:317px;width:329px;height:20px;background:#00ffff;"></div>
<div class="a" style="left:33px;top:337px;width:983px;height:1px;background:#000;"></div>
<div class="a" style="left:33px;top:338px;width:21px;height:19px;background:#fff;"></div>
<div class="a" style="left:55px;top:338px;width:961px;height:19px;background:#6bffff;"></div>
<div class="a" style="left:1017px;top:337px;width:329px;height:20px;background:#6bffff;"></div>
<div class="a" style="left:33px;top:357px;width:983px;height:1px;background:#000;"></div>
<div class="a" style="left:33px;top:358px;width:21px;height:19px;background:#fff;"></div>
<div class="a" style="left:55px;top:358px;width:961px;height:19px;background:#6bffff;"></div>
<div class="a" style="left:1017px;top:357px;width:329px;height:20px;background:#6bffff;"></div>
<div class="a" style="left:33px;top:377px;width:983px;height:1px;background:#000;"></div>
<div class="a" style="left:33px;top:378px;width:21px;height:19px;background:#fff;"></div>
<div class="a" style="left:55px;top:378px;width:961px;height:19px;background:#6bffff;"></div>
<div class="a" style="left:1017px;top:377px;width:329px;height:20px;background:#6bffff;"></div>
<div class="a" style="left:33px;top:397px;width:983px;height:1px;background:#000;"></div>
<div class="a" style="left:33px;top:398px;width:21px;height:19px;background:#fff;"></div>
<div class="a" style="left:55px;top:398px;width:961px;height:19px;background:#6bffff;"></div>
<div class="a" style="left:1017px;top:397px;width:329px;height:20px;background:#6bffff;"></div>
<div class="a" style="left:33px;top:417px;width:983px;height:1px;background:#000;"></div>
<div class="a" style="left:33px;top:418px;width:21px;height:19px;background:#fff;"></div>
<div class="a" style="left:55px;top:418px;width:961px;height:19px;background:#6bffff;"></div>
<div class="a" style="left:1017px;top:417px;width:329px;height:20px;background:#6bffff;"></div>
<div class="a" style="left:33px;top:437px;width:983px;height:1px;background:#000;"></div>
<div class="a" style="left:33px;top:438px;width:21px;height:19px;background:#fff;"></div>
<div class="a" style="left:55px;top:438px;width:961px;height:19px;background:#6bffff;"></div>
<div class="a" style="left:1017px;top:437px;width:329px;height:20px;background:#6bffff;"></div>
<div class="a" style="left:33px;top:457px;width:983px;height:1px;background:#000;"></div>
<div class="a" style="left:33px;top:458px;width:21px;height:19px;background:#fff;"></div>
<div class="a" style="left:55px;top:458px;width:961px;height:19px;background:#6bffff;"></div>
<div class="a" style="left:1017px;top:457px;width:329px;height:20px;background:#6bffff;"></div>
<div class="a" style="left:33px;top:477px;width:983px;height:1px;background:#000;"></div>
<div class="a" style="left:33px;top:478px;width:21px;height:19px;background:#fff;"></div>
<div class="a" style="left:55px;top:478px;width:961px;height:19px;background:#6bffff;"></div>
<div class="a" style="left:1017px;top:477px;width:329px;height:20px;background:#6bffff;"></div>
<div class="a" style="left:33px;top:497px;width:983px;height:1px;background:#000;"></div>
<div class="a" style="left:33px;top:498px;width:21px;height:19px;background:#fff;"></div>
<div class="a" style="left:55px;top:498px;width:961px;height:19px;background:#6bffff;"></div>
<div class="a" style="left:1017px;top:497px;width:329px;height:20px;background:#6bffff;"></div>
<div class="a" style="left:33px;top:517px;width:983px;height:1px;background:#000;"></div>
<div class="a" style="left:33px;top:518px;width:21px;height:19px;background:#fff;"></div>
<div class="a" style="left:55px;top:518px;width:961px;height:19px;background:#6bffff;"></div>
<div class="a" style="left:1017px;top:517px;width:329px;height:20px;background:#6bffff;"></div>
<div class="a" style="left:33px;top:537px;width:983px;height:1px;background:#000;"></div>
<div class="a" style="left:33px;top:538px;width:21px;height:19px;background:#fff;"></div>
<div class="a" style="left:55px;top:538px;width:961px;height:19px;background:#6bffff;"></div>
<div class="a" style="left:1017px;top:537px;width:329px;height:20px;background:#6bffff;"></div>
<div class="a" style="left:33px;top:557px;width:983px;height:1px;background:#000;"></div>
<div class="a" style="left:33px;top:558px;width:21px;height:19px;background:#fff;"></div>
<div class="a" style="left:55px;top:558px;width:961px;height:19px;background:#6bffff;"></div>
<div class="a" style="left:1017px;top:557px;width:329px;height:20px;background:#6bffff;"></div>
<div class="a" style="left:33px;top:577px;width:983px;height:1px;background:#000;"></div>
<div class="a" style="left:33px;top:578px;width:21px;height:19px;background:#fff;"></div>
<div class="a" style="left:55px;top:578px;width:961px;height:19px;background:#6bffff;"></div>
<div class="a" style="left:1017px;top:577px;width:329px;height:20px;background:#6bffff;"></div>
<div class="a" style="left:33px;top:597px;width:983px;height:1px;background:#000;"></div>
<div class="a" style="left:33px;top:598px;width:21px;height:19px;background:#fff;"></div>
<div class="a" style="left:55px;top:598px;width:961px;height:19px;background:#6bffff;"></div>
<div class="a" style="left:1017px;top:597px;width:329px;height:20px;background:#6bffff;"></div>
<div class="a" style="left:33px;top:617px;width:983px;height:1px;background:#000;"></div>
<div class="a" style="left:33px;top:618px;width:21px;height:19px;background:#fff;"></div>
<div class="a" style="left:55px;top:618px;width:961px;height:19px;background:#6bffff;"></div>
<div class="a" style="left:1017px;top:617px;width:329px;height:20px;background:#6bffff;"></div>
<div class="a" style="left:33px;top:637px;width:983px;height:1px;background:#000;"></div>
<div class="a" style="left:33px;top:638px;width:21px;height:19px;background:#00ffff;"></div>
<div class="a" style="left:55px;top:638px;width:961px;height:19px;background:#00ffff;"></div>
<div class="a" style="left:1017px;top:637px;width:329px;height:20px;background:#00ffff;"></div>
<div class="a" style="left:33px;top:657px;width:983px;height:1px;background:#000;"></div>
<div class="a" style="left:33px;top:658px;width:21px;height:19px;background:#fff;"></div>
<div class="a" style="left:55px;top:658px;width:961px;height:19px;background:#b8cce4;"></div>
<div class="a" style="left:1017px;top:657px;width:329px;height:20px;background:#b8cce4;"></div>
<div class="a" style="left:33px;top:677px;width:983px;height:1px;background:#000;"></div>
<div class="a" style="left:33px;top:678px;width:21px;height:4px;background:#fff;"></div>
<div class="a" style="left:55px;top:678px;width:1291px;height:4px;background:#b8cce4;"></div>
<div class="a" style="left:1017px;top:677px;width:329px;height:5px;background:#b8cce4;"></div>
<div class="a" style="left:54px;top:184px;width:1px;height:498px;background:#000;"></div>
<div class="a" style="left:141px;top:184px;width:1px;height:498px;background:#000;"></div>
<div class="a" style="left:363px;top:184px;width:1px;height:498px;background:#000;"></div>
<div class="a" style="left:510px;top:184px;width:1px;height:498px;background:#000;"></div>
<div class="a" style="left:560px;top:184px;width:1px;height:498px;background:#000;"></div>
<div class="a" style="left:656px;top:184px;width:1px;height:498px;background:#000;"></div>
<div class="a" style="left:730px;top:184px;width:1px;height:498px;background:#000;"></div>
<div class="a" style="left:810px;top:184px;width:1px;height:498px;background:#000;"></div>
<div class="a" style="left:872px;top:184px;width:1px;height:498px;background:#000;"></div>
<div class="a" style="left:945px;top:184px;width:1px;height:498px;background:#000;"></div>
<div class="a" style="left:1016px;top:184px;width:1px;height:498px;background:#000;"></div>
<div class="a" style="left:54px;top:257px;width:1px;height:2px;background:#fff;"></div>
<div class="a" style="left:141px;top:257px;width:1px;height:2px;background:#fff;"></div>
<div class="a" style="left:363px;top:257px;width:1px;height:2px;background:#fff;"></div>
<div class="a" style="left:510px;top:257px;width:1px;height:2px;background:#fff;"></div>
<div class="a" style="left:560px;top:257px;width:1px;height:2px;background:#fff;"></div>
<div class="a" style="left:656px;top:257px;width:1px;height:2px;background:#fff;"></div>
<div class="a" style="left:730px;top:257px;width:1px;height:2px;background:#fff;"></div>
<div class="a" style="left:810px;top:257px;width:1px;height:2px;background:#fff;"></div>
<div class="a" style="left:872px;top:257px;width:1px;height:2px;background:#fff;"></div>
<div class="a" style="left:945px;top:257px;width:1px;height:2px;background:#fff;"></div>
<div class="a" style="left:1016px;top:257px;width:1px;height:2px;background:#fff;"></div>
<div class="a t" style="left:62.51px;top:263px;font-size:12.3px;color:#000;transform:scaleX(1.0229);">1000865299</div>
<div class="a t" style="left:144.00px;top:263px;font-size:12.3px;color:#000;transform:scaleX(1.0799);">Nibu Nagi</div>
<div class="a t" style="left:366.00px;top:263px;font-size:12.3px;color:#000;transform:scaleX(1.1493);">8th Mile</div>
<div class="a t" style="left:513.00px;top:263px;font-size:12.3px;color:#000;transform:scaleX(0.9463);">CLT</div>
<div class="a t" style="left:842.01px;top:263px;font-size:12.3px;color:#000;transform:scaleX(1.0229);">9000</div>
<div class="a t" style="left:877.31px;top:263px;font-size:12.3px;color:#000;transform:scaleX(1.0450);">21.11.2025</div>
<div class="a t" style="left:969.21px;top:263px;font-size:12.3px;color:#000;transform:scaleX(0.9329);">OTS</div>
<div class="a t" style="left:62.51px;top:283px;font-size:12.3px;color:#000;transform:scaleX(1.0229);">1000227802</div>
<div class="a t" style="left:144.00px;top:283px;font-size:12.3px;color:#000;transform:scaleX(1.0510);">Lucy Sawkmie</div>
<div class="a t" style="left:366.00px;top:283px;font-size:12.3px;color:#000;transform:scaleX(1.1493);">8th Mile</div>
<div class="a t" style="left:513.00px;top:283px;font-size:12.3px;color:#000;transform:scaleX(0.9463);">CLT</div>
<div class="a t" style="left:842.01px;top:283px;font-size:12.3px;color:#000;transform:scaleX(1.0229);">9000</div>
<div class="a t" style="left:877.31px;top:283px;font-size:12.3px;color:#000;transform:scaleX(1.0450);">21.11.2025</div>
<div class="a t" style="left:969.21px;top:283px;font-size:12.3px;color:#000;transform:scaleX(0.9329);">OTS</div>
<div class="a t" style="left:62.51px;top:303px;font-size:12.3px;color:#000;transform:scaleX(1.0229);">1000228015</div>
<div class="a t" style="left:144.00px;top:303px;font-size:12.3px;color:#000;transform:scaleX(1.0905);">Ranjit Boro</div>
<div class="a t" style="left:366.00px;top:303px;font-size:12.3px;color:#000;transform:scaleX(1.1493);">9th Mile</div>
<div class="a t" style="left:513.00px;top:303px;font-size:12.3px;color:#000;transform:scaleX(0.9463);">CLT</div>
<div class="a t" style="left:842.01px;top:303px;font-size:12.3px;color:#000;transform:scaleX(1.0229);">7000</div>
<div class="a t" style="left:877.31px;top:303px;font-size:12.3px;color:#000;transform:scaleX(1.0450);">21.11.2025</div>
<div class="a t" style="left:969.21px;top:303px;font-size:12.3px;color:#000;transform:scaleX(0.9329);">OTS</div>
<div class="a t" style="left:62.51px;top:323px;font-size:12.3px;color:#000;transform:scaleX(1.0229);">1000225189</div>
<div class="a t" style="left:144.00px;top:323px;font-size:12.3px;color:#000;transform:scaleX(1.0705);">P Wahlang</div>
<div class="a t" style="left:366.00px;top:323px;font-size:12.3px;color:#000;transform:scaleX(1.1493);">9th Mile</div>
<div class="a t" style="left:513.00px;top:323px;font-size:12.3px;color:#000;transform:scaleX(0.9463);">CLT</div>
<div class="a t" style="left:588.67px;top:323px;font-size:12.3px;color:#000;transform:scaleX(1.0275);">46,422</div>
<div class="a t" style="left:833.64px;top:324px;font-size:11.2px;color:#000;transform:scaleX(1.0615);">46,422</div>
<div class="a t" style="left:877.31px;top:323px;font-size:12.3px;color:#000;transform:scaleX(1.0450);">20.11.2025</div>
<div class="a t" style="left:38.00px;top:343px;font-size:12.3px;color:#000;transform:scaleX(1.0229);">23</div>
<div class="a t" style="left:69.02px;top:343px;font-size:12.3px;color:#000;transform:scaleX(1.0229);">1000227868</div>
<div class="a t" style="left:144.00px;top:343px;font-size:12.3px;color:#000;transform:scaleX(1.0553);">Bholai Lapang</div>
<div class="a t" style="left:366.00px;top:343px;font-size:12.3px;color:#000;transform:scaleX(1.1493);">9th Mile</div>
<div class="a t" style="left:513.00px;top:343px;font-size:12.3px;color:#000;transform:scaleX(0.9463);">CLT</div>
<div class="a t" style="left:601.32px;top:343px;font-size:12.3px;color:#000;transform:scaleX(1.0269);">30293.62</div>
<div class="a t" style="left:707.01px;top:343px;font-size:12.3px;color:#000;transform:scaleX(1.0229);">619</div>
<div class="a t" style="left:749.29px;top:343px;font-size:12.3px;color:#000;transform:scaleX(1.0345);">25-Feb-25</div>
<div class="a t" style="left:838.34px;top:343px;font-size:12.3px;color:#000;transform:scaleX(1.0285);">7,851</div>
<div class="a t" style="left:877.31px;top:343px;font-size:12.3px;color:#000;transform:scaleX(1.0450);">12.11.2025</div>
<div class="a t" style="left:969.21px;top:343px;font-size:12.3px;color:#000;transform:scaleX(0.9329);">OTS</div>
<div class="a t" style="left:38.00px;top:363px;font-size:12.3px;color:#000;transform:scaleX(1.0229);">24</div>
<div class="a t" style="left:69.02px;top:363px;font-size:12.3px;color:#000;transform:scaleX(1.0229);">1000227878</div>
<div class="a t" style="left:144.00px;top:363px;font-size:12.3px;color:#000;transform:scaleX(1.0768);">Janita Wahlang</div>
<div class="a t" style="left:366.00px;top:363px;font-size:12.3px;color:#000;transform:scaleX(1.1493);">9th Mile</div>
<div class="a t" style="left:513.00px;top:363px;font-size:12.3px;color:#000;transform:scaleX(0.9463);">CLT</div>
<div class="a t" style="left:601.32px;top:363px;font-size:12.3px;color:#000;transform:scaleX(1.0269);">24842.23</div>
<div class="a t" style="left:700.01px;top:363px;font-size:12.3px;color:#000;transform:scaleX(1.0229);">7000</div>
<div class="a t" style="left:749.72px;top:363px;font-size:12.3px;color:#000;transform:scaleX(1.0656);">25-Apr-25</div>
<div class="a t" style="left:842.01px;top:363px;font-size:12.3px;color:#000;transform:scaleX(1.0229);">5500</div>
<div class="a t" style="left:877.31px;top:363px;font-size:12.3px;color:#000;transform:scaleX(1.0450);">21.11.2025</div>
<div class="a t" style="left:969.21px;top:363px;font-size:12.3px;color:#000;transform:scaleX(0.9329);">OTS</div>
<div class="a t" style="left:38.00px;top:383px;font-size:12.3px;color:#000;transform:scaleX(1.0229);">25</div>
<div class="a t" style="left:69.02px;top:383px;font-size:12.3px;color:#000;transform:scaleX(1.0229);">1000227983</div>
<div class="a t" style="left:144.00px;top:383px;font-size:12.3px;color:#000;transform:scaleX(1.0768);">Janita Wahlang</div>
<div class="a t" style="left:366.00px;top:383px;font-size:12.3px;color:#000;transform:scaleX(1.1493);">9th Mile</div>
<div class="a t" style="left:513.00px;top:383px;font-size:12.3px;color:#000;transform:scaleX(0.9463);">CLT</div>
<div class="a t" style="left:601.32px;top:383px;font-size:12.3px;color:#000;transform:scaleX(1.0269);">12631.41</div>
<div class="a t" style="left:693.01px;top:383px;font-size:12.3px;color:#000;transform:scaleX(1.0229);">28060</div>
<div class="a t" style="left:746.34px;top:383px;font-size:12.3px;color:#000;transform:scaleX(1.0867);">22-Mar-25</div>
<div class="a t" style="left:831.34px;top:383px;font-size:12.3px;color:#000;transform:scaleX(1.0275);">12,632</div>
<div class="a t" style="left:877.31px;top:383px;font-size:12.3px;color:#000;transform:scaleX(1.0450);">20.11.2025</div>
<div class="a t" style="left:38.00px;top:403px;font-size:12.3px;color:#000;transform:scaleX(1.0229);">26</div>
<div class="a t" style="left:69.02px;top:403px;font-size:12.3px;color:#000;transform:scaleX(1.0229);">1000225175</div>
<div class="a t" style="left:144.00px;top:403px;font-size:12.3px;color:#000;transform:scaleX(1.1010);">Thin War</div>
<div class="a t" style="left:366.00px;top:403px;font-size:12.3px;color:#000;transform:scaleX(1.1493);">9th Mile</div>
<div class="a t" style="left:513.00px;top:403px;font-size:12.3px;color:#000;transform:scaleX(0.9463);">CLT</div>
<div class="a t" style="left:601.32px;top:403px;font-size:12.3px;color:#000;transform:scaleX(1.0269);">47174.36</div>
<div class="a t" style="left:700.01px;top:403px;font-size:12.3px;color:#000;transform:scaleX(1.0229);">5000</div>
<div class="a t" style="left:749.72px;top:403px;font-size:12.3px;color:#000;transform:scaleX(1.0656);">21-Apr-25</div>
<div class="a t" style="left:835.01px;top:403px;font-size:12.3px;color:#000;transform:scaleX(1.0229);">10200</div>
<div class="a t" style="left:877.31px;top:403px;font-size:12.3px;color:#000;transform:scaleX(1.0450);">20.11.2025</div>
<div class="a t" style="left:969.21px;top:403px;font-size:12.3px;color:#000;transform:scaleX(0.9329);">OTS</div>
<div class="a t" style="left:38.00px;top:423px;font-size:12.3px;color:#000;transform:scaleX(1.0229);">27</div>
<div class="a t" style="left:69.02px;top:423px;font-size:12.3px;color:#000;transform:scaleX(1.0229);">1000227916</div>
<div class="a t" style="left:144.00px;top:423px;font-size:12.3px;color:#000;transform:scaleX(1.0553);">Bholai Lapang</div>
<div class="a t" style="left:366.00px;top:423px;font-size:12.3px;color:#000;transform:scaleX(1.1493);">9th Mile</div>
<div class="a t" style="left:513.00px;top:423px;font-size:12.3px;color:#000;transform:scaleX(0.9463);">CLT</div>
<div class="a t" style="left:601.32px;top:423px;font-size:12.3px;color:#000;transform:scaleX(1.0269);">35644.61</div>
<div class="a t" style="left:693.01px;top:423px;font-size:12.3px;color:#000;transform:scaleX(1.0229);">13100</div>
<div class="a t" style="left:746.34px;top:423px;font-size:12.3px;color:#000;transform:scaleX(1.0867);">25-Mar-25</div>
<div class="a t" style="left:835.01px;top:423px;font-size:12.3px;color:#000;transform:scaleX(1.0229);">10000</div>
<div class="a t" style="left:877.31px;top:423px;font-size:12.3px;color:#000;transform:scaleX(1.0450);">17.11.2025</div>
<div class="a t" style="left:38.00px;top:443px;font-size:12.3px;color:#000;transform:scaleX(1.0229);">28</div>
<div class="a t" style="left:69.02px;top:443px;font-size:12.3px;color:#000;transform:scaleX(1.0229);">1000227941</div>
<div class="a t" style="left:144.00px;top:443px;font-size:12.3px;color:#000;transform:scaleX(1.0683);">Khrang Lyngdoh</div>
<div class="a t" style="left:366.00px;top:443px;font-size:12.3px;color:#000;transform:scaleX(1.1493);">9th Mile</div>
<div class="a t" style="left:513.00px;top:443px;font-size:12.3px;color:#000;transform:scaleX(0.9463);">CLT</div>
<div class="a t" style="left:601.32px;top:443px;font-size:12.3px;color:#000;transform:scaleX(1.0269);">33005.24</div>
<div class="a t" style="left:707.01px;top:443px;font-size:12.3px;color:#000;transform:scaleX(1.0229);">345</div>
<div class="a t" style="left:746.34px;top:443px;font-size:12.3px;color:#000;transform:scaleX(1.0867);">30-Mar-23</div>
<div class="a t" style="left:960.40px;top:443px;font-size:12.3px;color:#000;transform:scaleX(0.9884);">DC_NP</div>
<div class="a t" style="left:38.00px;top:463px;font-size:12.3px;color:#000;transform:scaleX(1.0229);">29</div>
<div class="a t" style="left:69.02px;top:463px;font-size:12.3px;color:#000;transform:scaleX(1.0229);">1000227956</div>
<div class="a t" style="left:144.00px;top:463px;font-size:12.3px;color:#000;transform:scaleX(1.0768);">Janita Wahlang</div>
<div class="a t" style="left:366.00px;top:463px;font-size:12.3px;color:#000;transform:scaleX(1.1493);">9th Mile</div>
<div class="a t" style="left:513.00px;top:463px;font-size:12.3px;color:#000;transform:scaleX(0.9463);">CLT</div>
<div class="a t" style="left:601.32px;top:463px;font-size:12.3px;color:#000;transform:scaleX(1.0269);">19221.79</div>
<div class="a t" style="left:693.01px;top:463px;font-size:12.3px;color:#000;transform:scaleX(1.0229);">10000</div>
<div class="a t" style="left:746.34px;top:463px;font-size:12.3px;color:#000;transform:scaleX(1.0867);">24-Mar-25</div>
<div class="a t" style="left:842.01px;top:463px;font-size:12.3px;color:#000;transform:scaleX(1.0229);">5500</div>
<div class="a t" style="left:877.31px;top:463px;font-size:12.3px;color:#000;transform:scaleX(1.0450);">21.11.2025</div>
<div class="a t" style="left:38.00px;top:483px;font-size:12.3px;color:#000;transform:scaleX(1.0229);">30</div>
<div class="a t" style="left:69.02px;top:483px;font-size:12.3px;color:#000;transform:scaleX(1.0229);">1000227960</div>
<div class="a t" style="left:144.00px;top:483px;font-size:12.3px;color:#000;transform:scaleX(1.0549);">Bhulai Lapang</div>
<div class="a t" style="left:366.00px;top:483px;font-size:12.3px;color:#000;transform:scaleX(1.1493);">9th Mile</div>
<div class="a t" style="left:513.00px;top:483px;font-size:12.3px;color:#000;transform:scaleX(0.9463);">CLT</div>
<div class="a t" style="left:601.32px;top:483px;font-size:12.3px;color:#000;transform:scaleX(1.0269);">26518.42</div>
<div class="a t" style="left:700.01px;top:483px;font-size:12.3px;color:#000;transform:scaleX(1.0229);">2000</div>
<div class="a t" style="left:755.29px;top:483px;font-size:12.3px;color:#000;transform:scaleX(1.0279);">26-Jul-24</div>
<div class="a t" style="left:842.01px;top:483px;font-size:12.3px;color:#000;transform:scaleX(1.0229);">5700</div>
<div class="a t" style="left:877.31px;top:483px;font-size:12.3px;color:#000;transform:scaleX(1.0450);">21.11.2025</div>
<div class="a t" style="left:969.21px;top:483px;font-size:12.3px;color:#000;transform:scaleX(0.9329);">OTS</div>
<div class="a t" style="left:38.00px;top:503px;font-size:12.3px;color:#000;transform:scaleX(1.0229);">31</div>
<div class="a t" style="left:69.02px;top:503px;font-size:12.3px;color:#000;transform:scaleX(1.0229);">1000227985</div>
<div class="a t" style="left:144.00px;top:503px;font-size:12.3px;color:#000;transform:scaleX(1.1068);">Dorbar Raid Marwet</div>
<div class="a t" style="left:366.00px;top:503px;font-size:12.3px;color:#000;transform:scaleX(1.1493);">9th Mile</div>
<div class="a t" style="left:513.00px;top:503px;font-size:12.3px;color:#000;transform:scaleX(0.9463);">CLT</div>
<div class="a t" style="left:601.32px;top:503px;font-size:12.3px;color:#000;transform:scaleX(1.0269);">17120.59</div>
<div class="a t" style="left:700.01px;top:503px;font-size:12.3px;color:#000;transform:scaleX(1.0229);">8010</div>
<div class="a t" style="left:749.72px;top:503px;font-size:12.3px;color:#000;transform:scaleX(1.0656);">25-Apr-25</div>
<div class="a t" style="left:960.40px;top:503px;font-size:12.3px;color:#000;transform:scaleX(0.9884);">DC_NP</div>
<div class="a t" style="left:69.02px;top:523px;font-size:12.3px;color:#000;transform:scaleX(1.0229);">1000227934</div>
<div class="a t" style="left:144.00px;top:523px;font-size:12.3px;color:#000;transform:scaleX(1.1068);">Dorbar Raid Marwet</div>
<div class="a t" style="left:366.00px;top:523px;font-size:12.3px;color:#000;transform:scaleX(1.1493);">9th Mile</div>
<div class="a t" style="left:513.00px;top:523px;font-size:12.3px;color:#000;transform:scaleX(0.9463);">CLT</div>
<div class="a t" style="left:960.40px;top:523px;font-size:12.3px;color:#000;transform:scaleX(0.9884);">DC_NP</div>
<div class="a t" style="left:69.02px;top:543px;font-size:12.3px;color:#000;transform:scaleX(1.0229);">1000228010</div>
<div class="a t" style="left:144.00px;top:543px;font-size:12.3px;color:#000;transform:scaleX(1.1068);">Dorbar Raid Marwet</div>
<div class="a t" style="left:366.00px;top:543px;font-size:12.3px;color:#000;transform:scaleX(1.1493);">9th Mile</div>
<div class="a t" style="left:513.00px;top:543px;font-size:12.3px;color:#000;transform:scaleX(0.9463);">CLT</div>
<div class="a t" style="left:960.40px;top:543px;font-size:12.3px;color:#000;transform:scaleX(0.9884);">DC_NP</div>
<div class="a t" style="left:38.00px;top:563px;font-size:12.3px;color:#000;transform:scaleX(1.0229);">32</div>
<div class="a t" style="left:69.02px;top:563px;font-size:12.3px;color:#000;transform:scaleX(1.0229);">1000228006</div>
<div class="a t" style="left:144.00px;top:563px;font-size:12.3px;color:#000;transform:scaleX(1.0768);">Janita Wahlang</div>
<div class="a t" style="left:366.00px;top:563px;font-size:12.3px;color:#000;transform:scaleX(1.1493);">9th Mile</div>
<div class="a t" style="left:513.00px;top:563px;font-size:12.3px;color:#000;transform:scaleX(0.9463);">CLT</div>
<div class="a t" style="left:601.32px;top:563px;font-size:12.3px;color:#000;transform:scaleX(1.0269);">22410.29</div>
<div class="a t" style="left:693.01px;top:563px;font-size:12.3px;color:#000;transform:scaleX(1.0229);">20045</div>
<div class="a t" style="left:746.34px;top:563px;font-size:12.3px;color:#000;transform:scaleX(1.0867);">20-Mar-25</div>
<div class="a t" style="left:831.34px;top:563px;font-size:12.3px;color:#000;transform:scaleX(1.0531);">22,411</div>
<div class="a t" style="left:877.31px;top:563px;font-size:12.3px;color:#000;transform:scaleX(1.0450);">20.11.2025</div>
<div class="a t" style="left:969.21px;top:563px;font-size:12.3px;color:#000;transform:scaleX(0.9329);">OTS</div>
<div class="a t" style="left:38.00px;top:583px;font-size:12.3px;color:#000;transform:scaleX(1.0229);">33</div>
<div class="a t" style="left:69.02px;top:583px;font-size:12.3px;color:#000;transform:scaleX(1.0229);">1000229834</div>
<div class="a t" style="left:144.00px;top:583px;font-size:12.3px;color:#000;transform:scaleX(1.1492);">Teibor Mawthoh</div>
<div class="a t" style="left:366.00px;top:583px;font-size:12.3px;color:#000;transform:scaleX(1.1493);">9th Mile</div>
<div class="a t" style="left:513.00px;top:583px;font-size:12.3px;color:#000;transform:scaleX(0.9463);">CLT</div>
<div class="a t" style="left:601.32px;top:583px;font-size:12.3px;color:#000;transform:scaleX(1.0269);">63225.08</div>
<div class="a t" style="left:693.01px;top:583px;font-size:12.3px;color:#000;transform:scaleX(1.0229);">41572</div>
<div class="a t" style="left:749.72px;top:583px;font-size:12.3px;color:#000;transform:scaleX(1.0656);">01-Apr-25</div>
<div class="a t" style="left:38.00px;top:603px;font-size:12.3px;color:#000;transform:scaleX(1.0229);">34</div>
<div class="a t" style="left:69.02px;top:603px;font-size:12.3px;color:#000;transform:scaleX(1.0229);">1000225187</div>
<div class="a t" style="left:144.00px;top:603px;font-size:12.3px;color:#000;transform:scaleX(1.1018);">Teni Wahlang</div>
<div class="a t" style="left:366.00px;top:603px;font-size:12.3px;color:#000;transform:scaleX(1.1302);">9th mile</div>
<div class="a t" style="left:513.00px;top:603px;font-size:12.3px;color:#000;transform:scaleX(0.9463);">CLT</div>
<div class="a t" style="left:590.51px;top:603px;font-size:12.3px;color:#000;transform:scaleX(1.0229);">16097</div>
<div class="a t" style="left:693.01px;top:603px;font-size:12.3px;color:#000;transform:scaleX(1.0229);">10500</div>
<div class="a t" style="left:747.93px;top:603px;font-size:12.3px;color:#000;transform:scaleX(1.0458);">08-Aug-25</div>
<div class="a t" style="left:969.21px;top:603px;font-size:12.3px;color:#000;transform:scaleX(0.9329);">OTS</div>
<div class="a t" style="left:38.00px;top:623px;font-size:12.3px;color:#000;transform:scaleX(1.0229);">35</div>
<div class="a t" style="left:69.02px;top:623px;font-size:12.3px;color:#000;transform:scaleX(1.0229);">1000221988</div>
<div class="a t" style="left:144.00px;top:623px;font-size:12.3px;color:#000;transform:scaleX(1.0679);">Krishna Bahadur</div>
<div class="a t" style="left:366.00px;top:623px;font-size:12.3px;color:#000;transform:scaleX(1.1148);">Mawsmai</div>
<div class="a t" style="left:513.00px;top:623px;font-size:12.3px;color:#000;transform:scaleX(0.9463);">CLT</div>
<div class="a t" style="left:601.32px;top:623px;font-size:12.3px;color:#000;transform:scaleX(1.0269);">38729.95</div>
<div class="a t" style="left:700.01px;top:623px;font-size:12.3px;color:#000;transform:scaleX(1.0229);">5000</div>
<div class="a t" style="left:749.72px;top:623px;font-size:12.3px;color:#000;transform:scaleX(1.0656);">02-Apr-25</div>
<div class="a t" style="left:831.34px;top:623px;font-size:12.3px;color:#000;transform:scaleX(1.0275);">10,000</div>
<div class="a t" style="left:877.31px;top:623px;font-size:12.3px;color:#000;transform:scaleX(1.0450);">20.11.2025</div>
<div class="a t" style="left:969.21px;top:623px;font-size:12.3px;color:#000;transform:scaleX(0.9329);">OTS</div>
<div class="a t" style="left:62.51px;top:643px;font-size:12.3px;color:#000;transform:scaleX(1.0229);">1000224992</div>
<div class="a t" style="left:144.00px;top:643px;font-size:12.3px;color:#000;transform:scaleX(1.0865);">Syiem Raid Marwet</div>
<div class="a t" style="left:366.00px;top:643px;font-size:12.3px;color:#000;transform:scaleX(1.1319);">10th Mile</div>
<div class="a t" style="left:513.00px;top:643px;font-size:12.3px;color:#000;transform:scaleX(0.9463);">CLT</div>
<div class="a t" style="left:835.01px;top:643px;font-size:12.3px;color:#000;transform:scaleX(1.0229);">20000</div>
<div class="a t" style="left:877.31px;top:643px;font-size:12.3px;color:#000;transform:scaleX(1.0450);">21.11.2025</div>
<div class="a t" style="left:969.21px;top:643px;font-size:12.3px;color:#000;transform:scaleX(0.9329);">OTS</div>
<div class="a t" style="left:38.00px;top:663px;font-size:12.3px;color:#000;transform:scaleX(1.0229);">36</div>
<div class="a t" style="left:69.02px;top:663px;font-size:12.3px;color:#000;transform:scaleX(1.0229);">1000228104</div>
<div class="a t" style="left:144.00px;top:663px;font-size:12.3px;color:#000;transform:scaleX(1.0443);">Jenendra Sangma</div>
<div class="a t" style="left:366.00px;top:663px;font-size:12.3px;color:#000;transform:scaleX(1.0870);">Jorbil</div>
<div class="a t" style="left:513.00px;top:663px;font-size:12.3px;color:#000;transform:scaleX(0.9463);">CLT</div>
<div class="a t" style="left:608.32px;top:663px;font-size:12.3px;color:#000;transform:scaleX(1.0275);">51940.4</div>
<div class="a t" style="left:693.01px;top:663px;font-size:12.3px;color:#000;transform:scaleX(1.0229);">10000</div>
<div class="a t" style="left:750.95px;top:663px;font-size:12.3px;color:#000;transform:scaleX(1.0301);">28-Jun-24</div>
<div class="a" style="left:1346px;top:163px;width:20px;height:519px;background:linear-gradient(90deg,#dde1e7,#e4e7ec);"></div>
<div class="a" style="left:1346px;top:163px;width:1px;height:519px;background:#b9bec6;"></div>
<div class="a" style="left:1362px;top:163px;width:1px;height:519px;background:#a9aeb6;"></div>
<div class="a" style="left:1347px;top:165px;width:14px;height:7px;background:#f6f7f9;border:1px solid #8a9099;"></div>
<div class="a" style="left:1349px;top:168px;width:10px;height:1px;background:#8a9099;"></div>
<svg class="a" style="left:1349px;top:177px;" width="11" height="6" viewBox="0 0 11 6"><path d="M0 5.5 L5.5 0 L11 5.5 Z" fill="#4e5560"/></svg>
<div class="a" style="left:1347px;top:639px;width:14px;height:17px;background:linear-gradient(90deg,#fafbfc,#e6e9ee);border:1px solid #8e949c;border-radius:2px;"></div>
<div class="a" style="left:1350px;top:644px;width:8px;height:1px;background:#6a7078;"></div>
<div class="a" style="left:1350px;top:646px;width:8px;height:1px;background:#6a7078;"></div>
<div class="a" style="left:1350px;top:648px;width:8px;height:1px;background:#6a7078;"></div>
<div class="a" style="left:1350px;top:650px;width:8px;height:1px;background:#6a7078;"></div>
<svg class="a" style="left:1349px;top:670px;" width="11" height="6" viewBox="0 0 11 6"><path d="M0 0 H11 L5.5 5.5 Z" fill="#4e5560"/></svg>
<div class="a" style="left:1347px;top:680px;width:15px;height:2px;background:#dde1e7;"></div>
<div class="a" style="left:0px;top:682px;width:1366px;height:16px;background:#dde1e8;"></div>
<div class="a" style="left:0px;top:682px;width:62px;height:1px;background:#a3a9b1;"></div>
<div class="a" style="left:0px;top:697px;width:1366px;height:2px;background:#9aa0a8;"></div>
<svg class="a" style="left:5px;top:686px;" width="52" height="8" viewBox="0 0 52 8"><rect x="1" y="0" width="1.3" height="7" fill="#4a5260"/><path d="M7 0 L2.5 3.5 L7 7 Z" fill="#4a5260"/><path d="M21 0 L16.5 3.5 L21 7 Z" fill="#4a5260"/><path d="M31 0 L35.5 3.5 L31 7 Z" fill="#4a5260"/><path d="M45 0 L49.5 3.5 L45 7 Z" fill="#4a5260"/><rect x="49.7" y="0" width="1.3" height="7" fill="#4a5260"/></svg>
<div class="a" style="left:62px;top:682px;width:1px;height:15px;background:#a3a9b1;"></div>
<svg class="a" style="left:0px;top:682px;" width="720" height="16" viewBox="0 0 720 16"></svg>
<svg class="a" style="left:0px;top:682px" width="720" height="16" viewBox="0 0 720 16"><rect x="135" y="0" width="560" height="15" fill="#e3e6eb"/><path d="M131 15 L144 0" stroke="#9aa1aa" stroke-width="1" fill="none"/><path d="M238 15 L251 0" stroke="#9aa1aa" stroke-width="1" fill="none"/><path d="M280.5 15 L293 0" stroke="#9aa1aa" stroke-width="1" fill="none"/><path d="M338 15 L351 0" stroke="#9aa1aa" stroke-width="1" fill="none"/><path d="M395 15 L408 0" stroke="#9aa1aa" stroke-width="1" fill="none"/><path d="M532 15 L545 0" stroke="#9aa1aa" stroke-width="1" fill="none"/><path d="M592 15 L604 0" stroke="#9aa1aa" stroke-width="1" fill="none"/><path d="M652 15 L665 0" stroke="#9aa1aa" stroke-width="1" fill="none"/><path d="M686 15 L698 0" stroke="#9aa1aa" stroke-width="1" fill="none"/><path d="M0 15 H698" stroke="#9aa1aa"/><path d="M63 0 H144 L131 15.5 H63 Z" fill="#fff"/><path d="M144 0 L131 15.5" stroke="#9aa1aa"/></svg>
<div class="a t" style="left:72.60px;top:686px;font-size:11px;color:#1d2e4a;transform:scaleX(1.1009);font-weight:bold;">DC_Cons</div>
<div class="a t" style="left:148.20px;top:686px;font-size:10.8px;color:#3d4656;transform:scaleX(1.0989);">Permanent_DC</div>
<div class="a t" style="left:251.00px;top:686px;font-size:10.8px;color:#3d4656;transform:scaleX(1.0675);">OTS</div>
<div class="a t" style="left:292.80px;top:686px;font-size:10.8px;color:#3d4656;transform:scaleX(0.9943);">DC_NP</div>
<div class="a t" style="left:350.50px;top:686px;font-size:10.8px;color:#3d4656;transform:scaleX(1.1247);">Sheet1</div>
<div class="a t" style="left:412.80px;top:686px;font-size:10.8px;color:#3d4656;transform:scaleX(1.1472);">Re-connected cons.</div>
<div class="a t" style="left:547.40px;top:686px;font-size:10.8px;color:#3d4656;transform:scaleX(1.1481);">Sheet2</div>
<div class="a t" style="left:607.10px;top:686px;font-size:10.8px;color:#3d4656;transform:scaleX(1.1481);">Sheet3</div>
<svg class="a" style="left:667px;top:683px;" width="16" height="14" viewBox="0 0 16 14"><rect x="3.5" y="4.5" width="11" height="8" rx="1.5" fill="#f2f5fa" stroke="#5a7cb8"/><path d="M2 12.5 H12" stroke="#5a7cb8"/><circle cx="4" cy="4" r="2.5" fill="#f8c030"/><path d="M4 0 V8 M0 4 H8 M1.2 1.2 L6.8 6.8 M6.8 1.2 L1.2 6.8" stroke="#e8a010" stroke-width="0.8"/></svg>
<div class="a" style="left:809px;top:684px;width:7px;height:13px;background:#fff;border:1px solid #7d848d;"></div>
<div class="a" style="left:812px;top:687px;width:1px;height:7px;background:#555;"></div>
<svg class="a" style="left:821px;top:686px;" width="5" height="9" viewBox="0 0 5 9"><path d="M5 0 V8 L0 4 Z" fill="#4e5560"/></svg>
<div class="a" style="left:833px;top:683px;width:433px;height:14px;background:linear-gradient(#f8f9fb,#e3e6eb);border:1px solid #9aa1aa;border-radius:2px;"></div>
<div class="a" style="left:1046px;top:686px;width:1px;height:8px;background:#7a8088;"></div>
<div class="a" style="left:1048px;top:686px;width:1px;height:8px;background:#7a8088;"></div>
<div class="a" style="left:1050px;top:686px;width:1px;height:8px;background:#7a8088;"></div>
<div class="a" style="left:1052px;top:686px;width:1px;height:8px;background:#7a8088;"></div>
<svg class="a" style="left:1327px;top:686px;" width="5" height="9" viewBox="0 0 5 9"><path d="M0 0 V8 L5 4 Z" fill="#4e5560"/></svg>
<div class="a" style="left:1338px;top:684px;width:8px;height:13px;background:#fff;border:1px solid #7d848d;"></div>
<div class="a" style="left:1341px;top:687px;width:1px;height:7px;background:#555;"></div>
<div class="a" style="left:1346px;top:682px;width:20px;height:16px;background:#dde1e8;"></div>
<div class="a" style="left:0px;top:699px;width:1366px;height:22px;background:linear-gradient(#e9ebee 0%,#dde0e4 40%,#c6c9ce 90%,#b8bbc0 100%);"></div>
<div class="a t" style="left:8.30px;top:703px;font-size:10.8px;color:#2d3440;transform:scaleX(0.9770);">Ready</div>
<div class="a" style="left:48px;top:700px;width:1px;height:19px;background:#b0b5bc;"></div>
<div class="a t" style="left:948.50px;top:704px;font-size:10.8px;color:#2d3440;transform:scaleX(1.0655);">Count: 0</div>
<div class="a t" style="left:1020.30px;top:704px;font-size:10.8px;color:#2d3440;transform:scaleX(0.9704);">Sum: 0</div>
<div class="a" style="left:1124px;top:700px;width:1px;height:19px;background:#b0b5bc;"></div>
<div class="a" style="left:1129px;top:700px;width:19px;height:19px;background:linear-gradient(#ffefb0,#ffd45c);border:1px solid #d7a93f;border-radius:2px;"></div>
<svg class="a" style="left:1132px;top:704px;" width="14" height="11" viewBox="0 0 14 11"><rect x="0.5" y="0.5" width="12" height="10" fill="#fff" stroke="#555"/><path d="M0.5 3.5 H12.5 M0.5 6.5 H12.5 M4.5 0.5 V10.5 M8.5 0.5 V10.5" stroke="#555"/></svg>
<svg class="a" style="left:1150px;top:703px;" width="14" height="13" viewBox="0 0 14 13"><rect x="0.5" y="0.5" width="13" height="12" fill="#8e949c"/><rect x="3" y="2.5" width="8" height="8" fill="#fff"/><path d="M4.5 4.5 H9.5 M4.5 6.5 H9.5 M4.5 8.5 H9.5" stroke="#999"/></svg>
<svg class="a" style="left:1169px;top:703px;" width="14" height="13" viewBox="0 0 14 13"><rect x="0.5" y="0.5" width="13" height="12" fill="#8e949c"/><rect x="2" y="2" width="4" height="6" fill="#fff"/><rect x="8" y="2" width="4" height="4" fill="#fff"/></svg>
<div class="a t" style="left:1195.40px;top:704px;font-size:10.8px;color:#2d3440;transform:scaleX(0.9630);">100%</div>
<svg class="a" style="left:1229px;top:700px;" width="136" height="19" viewBox="0 0 136 19"><circle cx="9" cy="8.5" r="7.5" fill="#f3f4f6" stroke="#8a9099"/><rect x="5" y="7.7" width="8" height="1.8" fill="#555"/><path d="M17 8.5 H117" stroke="#9aa0a8" stroke-width="1.2"/><path d="M17 9.6 H117" stroke="#f4f5f7" stroke-width="0.8"/><path d="M63.5 2.5 H71.5 V11 L67.5 14.5 L63.5 11 Z" fill="#fafbfc" stroke="#7d848d"/><circle cx="125" cy="8.5" r="7.5" fill="#f3f4f6" stroke="#8a9099"/><rect x="121" y="7.7" width="8" height="1.8" fill="#555"/><rect x="124.1" y="4.5" width="1.8" height="8" fill="#555"/></svg>
<div class="a t" style="left:1073.70px;top:646px;font-size:18px;color:rgba(130,130,130,0.38);transform:scaleX(1.0961);">Activate Windows</div>
<div class="a t" style="left:1073.70px;top:671px;font-size:13.6px;color:rgba(130,130,130,0.38);transform:scaleX(1.0933);">Go to Settings to activate Windows.</div>
<div class="a" style="left:0px;top:721px;width:1366px;height:47px;background:#cae5ec;"></div>
<svg class="a" style="left:19px;top:724px;" width="30" height="32" viewBox="0 0 30 32"><defs><linearGradient id="sun" x1="0" y1="0" x2="1" y2="1"><stop offset="0" stop-color="#f6c425"/><stop offset="1" stop-color="#ec5a10"/></linearGradient></defs><circle cx="12" cy="19" r="10" fill="url(#sun)"/><circle cx="19" cy="10" r="8" fill="#c4281c"/></svg>
<div class="a t" style="left:35.50px;top:730px;font-size:11px;color:#fff;transform:scaleX(0.9808);">9</div>
<div class="a t" style="left:50.50px;top:730px;font-size:12px;color:#1b1b1b;transform:scaleX(0.9287);">27°C</div>
<div class="a t" style="left:50.50px;top:747px;font-size:12px;color:#4b4b4b;transform:scaleX(0.9757);">Sunny</div>
<svg class="a" style="left:428px;top:733px;" width="24" height="24" viewBox="0 0 24 24"><defs><linearGradient id="wl" x1="0" y1="0" x2="1" y2="1"><stop offset="0" stop-color="#52d2fa"/><stop offset="1" stop-color="#0a6fd6"/></linearGradient></defs><path d="M0 1.5 Q0 0 1.5 0 H11 V11 H0 Z M12 0 H21.5 Q23 0 23 1.5 V11 H12 Z M0 12 H11 V23 H1.5 Q0 23 0 21.5 Z M12 12 H23 V21.5 Q23 23 21.5 23 H12 Z" fill="url(#wl)"/></svg>
<div class="a" style="left:465px;top:729px;width:219px;height:30px;background:linear-gradient(#f4f9fa,#eaf4f6);border:1px solid #c3d6dc;border-radius:15px;"></div>
<svg class="a" style="left:475px;top:736px;" width="16" height="16" viewBox="0 0 16 16"><circle cx="6.5" cy="6.5" r="5.2" fill="none" stroke="#1f1f1f" stroke-width="1.6"/><path d="M10.5 10.5 L15 15" stroke="#1f1f1f" stroke-width="1.8"/></svg>
<div class="a t" style="left:501.60px;top:739px;font-size:12.3px;color:#5b5b5b;transform:scaleX(1.0238);">Search</div>
<svg class="a" style="left:630px;top:731px;" width="48" height="27" viewBox="0 0 48 27"><path d="M3 24 Q5 18 9 13 M5 20 Q3 17 1 17 M9 22 Q11 19 13 19" stroke="#6aa040" stroke-width="1.3" fill="none"/><circle cx="2.5" cy="5.5" r="1.6" fill="#f6a030"/><circle cx="6" cy="4.5" r="1.6" fill="#f6a030"/><circle cx="4" cy="9" r="1.6" fill="#f6a030"/><circle cx="8" cy="9.5" r="1.5" fill="#f6a030"/><path d="M21 6 L17 1.5 M23 6 L27 1.5" stroke="#334" stroke-width="1"/><circle cx="22" cy="5.5" r="1.5" fill="#334"/><rect x="11" y="6.5" width="26" height="17.5" rx="2" fill="#c08850" stroke="#7a4a28" stroke-width="0.9"/><rect x="13" y="8.5" width="16" height="13.5" rx="4.5" fill="#3e5e58" stroke="#2a3a38" stroke-width="0.7"/><rect x="30.5" y="9" width="4.5" height="12" fill="#ead8b2"/><circle cx="32.8" cy="11.5" r="1" fill="#8a6a40"/><circle cx="32.8" cy="14.5" r="1" fill="#8a6a40"/><path d="M14 24 L13 26 M34 24 L35 26" stroke="#7a4a28" stroke-width="1.6"/><path d="M40 25 Q42 18 45 12 M43 18 Q46 17 47 15" stroke="#6aa040" stroke-width="1.3" fill="none"/><circle cx="45" cy="6" r="2.5" fill="#f29080"/><circle cx="41" cy="12" r="1.8" fill="#f07040"/><circle cx="46" cy="12" r="1.5" fill="#f07040"/></svg>
<svg class="a" style="left:696px;top:733px;" width="25" height="23" viewBox="0 0 25 23"><rect x="0" y="6" width="18" height="16" rx="1.5" fill="#1e1e1e"/><rect x="6" y="0" width="18" height="16" rx="1.5" fill="#f3f3f3" stroke="#dcdcdc" stroke-width="0.6"/><rect x="6" y="6" width="12" height="10" fill="#bdbdbd"/></svg>
<svg class="a" style="left:739px;top:732px;" width="26" height="24" viewBox="0 0 26 24"><defs><linearGradient id="cp1" x1="0.2" y1="0" x2="0.5" y2="1"><stop offset="0" stop-color="#1a8ef0"/><stop offset="0.45" stop-color="#30c0a0"/><stop offset="0.75" stop-color="#c8d020"/><stop offset="1" stop-color="#f06a20"/></linearGradient><linearGradient id="cp2" x1="0.5" y1="0" x2="0.5" y2="1"><stop offset="0" stop-color="#3a5ae8"/><stop offset="0.4" stop-color="#b050e0"/><stop offset="0.8" stop-color="#f06a90"/><stop offset="1" stop-color="#f08040"/></linearGradient></defs><path d="M8 1.5 Q9.5 0.5 12 0.5 H19 Q16 1 15 4.5 L10.5 19 Q9.5 22.5 5.5 22.5 H3.5 Q0.5 22.5 1 19 L5 5 Q6 2.5 8 1.5 Z" fill="url(#cp1)"/><path d="M18 22.5 Q16.5 23.5 14 23.5 H7 Q10 23 11 19.5 L15.5 5 Q16.5 1.5 20.5 1.5 H22.5 Q25.5 1.5 25 5 L21 19 Q20 21.5 18 22.5 Z" fill="url(#cp2)"/></svg>
<svg class="a" style="left:783px;top:732px;" width="26" height="24" viewBox="0 0 26 24"><circle cx="14" cy="4.5" r="3.8" fill="#7b83eb"/><circle cx="22" cy="7" r="3" fill="#5059c9"/><rect x="17" y="11" width="9" height="11" rx="4" fill="#5059c9"/><rect x="8" y="9" width="13" height="14" rx="5" fill="#7b83eb"/><rect x="0" y="6" width="13" height="13" rx="1.5" fill="#4b53bc"/><text x="6.5" y="16" font-family="Liberation Sans" font-size="10" font-weight="bold" text-anchor="middle" fill="#fff">T</text></svg>
<svg class="a" style="left:827px;top:733px;" width="26" height="23" viewBox="0 0 26 23"><path d="M0 1.5 Q0 0 1.5 0 H9 L11 3 H24.5 Q26 3 26 4.5 V21.5 Q26 23 24.5 23 H1.5 Q0 23 0 21.5 Z" fill="#f8c233"/><path d="M0 5 H26 V21.5 Q26 23 24.5 23 H1.5 Q0 23 0 21.5 Z" fill="#ffd865"/><rect x="5" y="15" width="16" height="8" rx="1.5" fill="#1f7fd8"/></svg>
<div class="a" style="left:837px;top:760px;width:6px;height:3px;background:#7a8588;border-radius:2px;"></div>
<svg class="a" style="left:871px;top:731px;" width="26" height="26" viewBox="0 0 26 26"><defs><linearGradient id="ed1" x1="0" y1="0" x2="1" y2="0.6"><stop offset="0" stop-color="#1a9ad8"/><stop offset="0.6" stop-color="#2bb8d0"/><stop offset="1" stop-color="#5ad870"/></linearGradient><linearGradient id="ed2" x1="0" y1="0" x2="0.6" y2="1"><stop offset="0" stop-color="#1b78d0"/><stop offset="1" stop-color="#0e4fa0"/></linearGradient></defs><path d="M1 12 Q2 1 13 0.8 Q24 1 25 11 Q25.5 16 21 17 Q17 17.5 13 17 Q9.5 16.5 9.5 13.5 Q9.5 10.5 14 10 Q11 6 7 7.5 Q2 9.5 1 12 Z" fill="url(#ed1)"/><path d="M1 12 Q2 9.5 7 7.5 Q11 6 14 10 Q9.5 10.5 9.5 13.5 Q9.5 18 15 19.5 Q20 20.5 24 18 Q21 25 13 25 Q4 25 1.5 17 Q0.8 14.5 1 12 Z" fill="url(#ed2)"/></svg>
<div class="a" style="left:881px;top:760px;width:6px;height:3px;background:#7a8588;border-radius:2px;"></div>
<div class="a" style="left:909px;top:725px;width:38px;height:38px;background:rgba(255,255,255,0.42);border-radius:4px;border:1px solid rgba(255,255,255,0.5);"></div>
<svg class="a" style="left:915px;top:732px;" width="24" height="24" viewBox="0 0 24 24"><rect x="0.5" y="0.5" width="21" height="22" fill="#fff" stroke="#2f7a3e"/><rect x="2" y="2" width="18" height="19" fill="#d8ead8"/><path d="M3 3 L9 11 L3 19 H7 L11 13.5 L15 19 H19 L13 11 L19 3 H15 L11 8.5 L7 3 Z" fill="#2e8a3c"/><path d="M12 14 L24 12 V22 L14 23 Z" fill="#f6f6f6" stroke="#8aa" stroke-width="0.5"/></svg>
<div class="a" style="left:920px;top:761px;width:16px;height:3px;background:#0a64c2;border-radius:2px;"></div>
<svg class="a" style="left:1122px;top:739px;" width="12" height="9" viewBox="0 0 12 9"><path d="M1 7.5 L6 2 L11 7.5" fill="none" stroke="#1a1a1a" stroke-width="1.5"/></svg>
<svg class="a" style="left:1151px;top:735px;" width="19" height="19" viewBox="0 0 19 19"><path d="M3 8 A7 7 0 0 1 14.5 4" fill="none" stroke="#1a1a1a" stroke-width="1.4"/><path d="M15.5 1 V5 H11.5" fill="none" stroke="#1a1a1a" stroke-width="1.4"/><path d="M14 11 A7 7 0 0 1 2.5 14" fill="none" stroke="#1a1a1a" stroke-width="1.4"/><path d="M1.5 17 V13.5 H5" fill="none" stroke="#1a1a1a" stroke-width="1.4"/><circle cx="13" cy="13" r="4" fill="#0c74d8"/></svg>
<div class="a t" style="left:1186.30px;top:732px;font-size:11.8px;color:#1a1a1a;transform:scaleX(0.9034);">ENG</div>
<div class="a t" style="left:1192.00px;top:748px;font-size:11.8px;color:#1a1a1a;transform:scaleX(0.9746);">IN</div>
<svg class="a" style="left:1227px;top:735px;" width="18" height="18" viewBox="0 0 18 18"><rect x="0.7" y="2.7" width="11.5" height="9" fill="none" stroke="#1a1a1a" stroke-width="1.3"/><path d="M4 15 H10 M7 12 V15" stroke="#1a1a1a" stroke-width="1.3"/><rect x="13" y="0.7" width="3.5" height="5" rx="1.5" fill="none" stroke="#1a1a1a" stroke-width="1.1"/><path d="M14.7 6 V15.5 H10" stroke="#1a1a1a" stroke-width="1.1" fill="none"/></svg>
<svg class="a" style="left:1253px;top:736px;" width="17" height="17" viewBox="0 0 17 17"><path d="M1 6 H3.5 L7 3 V12 L3.5 9 H1 Z" fill="none" stroke="#1a1a1a" stroke-width="1.2"/><circle cx="11.5" cy="11.5" r="4.3" fill="#1a1a1a"/><path d="M9.7 9.7 L13.3 13.3 M13.3 9.7 L9.7 13.3" stroke="#fff" stroke-width="1.2"/></svg>
<div class="a t" style="left:1318.50px;top:731px;font-size:11.3px;color:#1a1a1a;transform:scaleX(1.0079);">14:10</div>
<div class="a t" style="left:1284.60px;top:747px;font-size:11.3px;color:#1a1a1a;transform:scaleX(1.0954);">21-11-2025</div>
</body></html>
